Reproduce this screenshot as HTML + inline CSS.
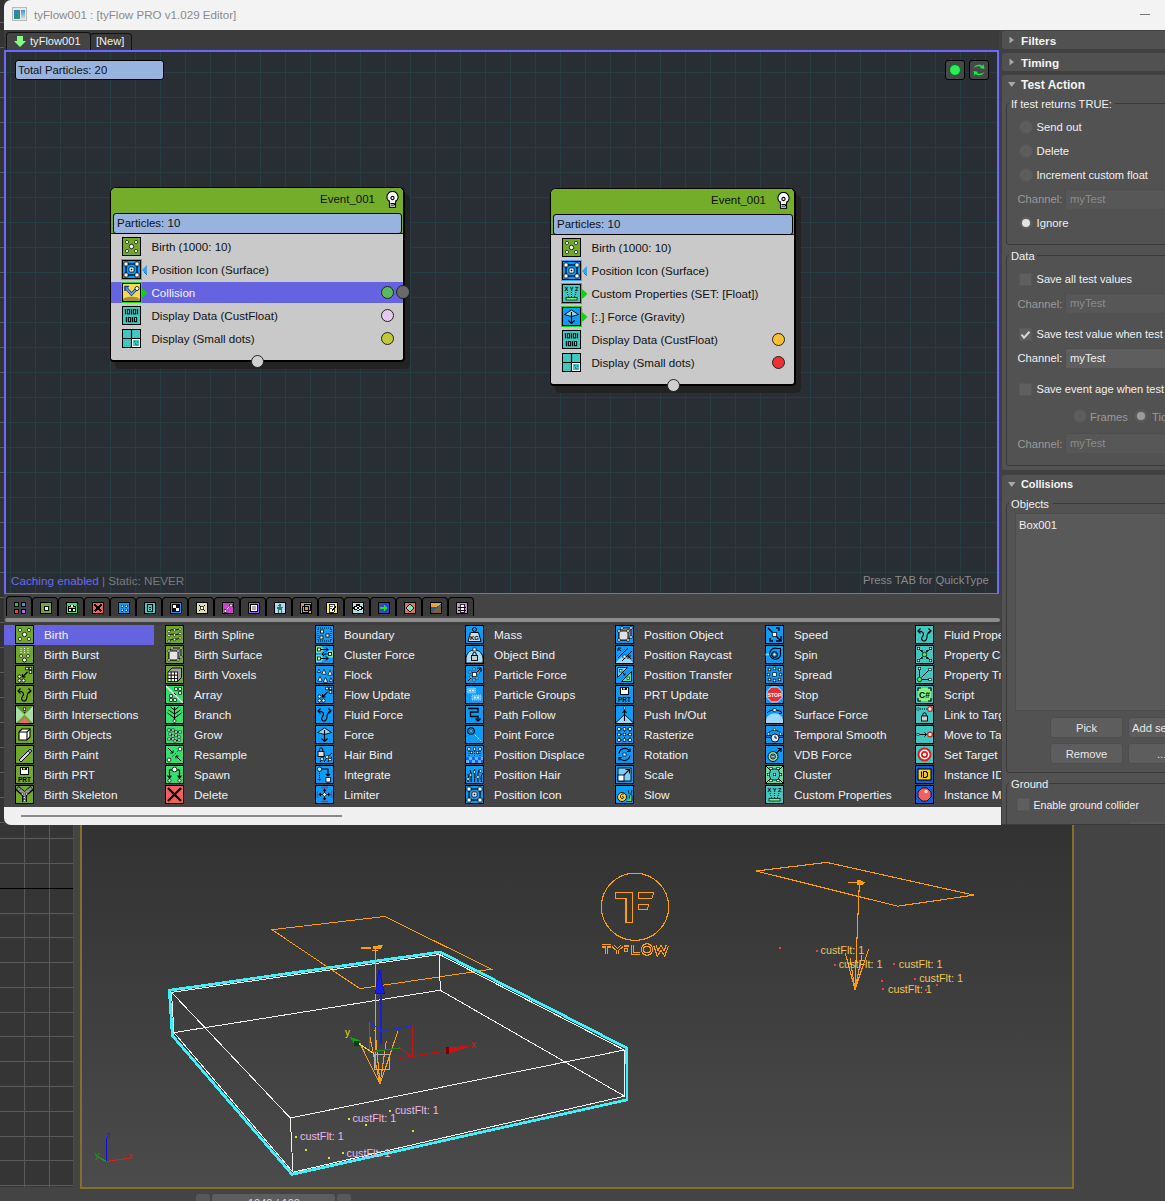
<!DOCTYPE html><html><head><meta charset="utf-8"><style>
*{box-sizing:border-box;margin:0;padding:0}
html,body{width:1165px;height:1201px;overflow:hidden;background:#3a3a3a;font-family:"Liberation Sans",sans-serif}
.a{position:absolute}
.t{position:absolute;white-space:nowrap;line-height:1}
</style></head><body>
<div class="a" style="left:0;top:0;width:4px;height:825px;background:#333"></div><div class="a" style="left:0;top:22px;width:4px;height:1px;background:#5c5c5c"></div><div class="a" style="left:0;top:47px;width:4px;height:1px;background:#5c5c5c"></div><div class="a" style="left:0;top:72px;width:4px;height:1px;background:#5c5c5c"></div><div class="a" style="left:0;top:97px;width:4px;height:1px;background:#5c5c5c"></div><div class="a" style="left:0;top:122px;width:4px;height:1px;background:#5c5c5c"></div><div class="a" style="left:0;top:147px;width:4px;height:1px;background:#5c5c5c"></div><div class="a" style="left:0;top:172px;width:4px;height:1px;background:#5c5c5c"></div><div class="a" style="left:0;top:197px;width:4px;height:1px;background:#5c5c5c"></div><div class="a" style="left:0;top:222px;width:4px;height:1px;background:#5c5c5c"></div><div class="a" style="left:0;top:247px;width:4px;height:1px;background:#5c5c5c"></div><div class="a" style="left:0;top:272px;width:4px;height:1px;background:#5c5c5c"></div><div class="a" style="left:0;top:297px;width:4px;height:1px;background:#5c5c5c"></div><div class="a" style="left:0;top:322px;width:4px;height:1px;background:#5c5c5c"></div><div class="a" style="left:0;top:347px;width:4px;height:1px;background:#5c5c5c"></div><div class="a" style="left:0;top:372px;width:4px;height:1px;background:#5c5c5c"></div><div class="a" style="left:0;top:397px;width:4px;height:1px;background:#5c5c5c"></div><div class="a" style="left:0;top:422px;width:4px;height:1px;background:#5c5c5c"></div><div class="a" style="left:0;top:447px;width:4px;height:1px;background:#5c5c5c"></div><div class="a" style="left:0;top:472px;width:4px;height:1px;background:#5c5c5c"></div><div class="a" style="left:0;top:497px;width:4px;height:1px;background:#5c5c5c"></div><div class="a" style="left:0;top:522px;width:4px;height:1px;background:#5c5c5c"></div><div class="a" style="left:0;top:547px;width:4px;height:1px;background:#5c5c5c"></div><div class="a" style="left:0;top:572px;width:4px;height:1px;background:#5c5c5c"></div><div class="a" style="left:0;top:597px;width:4px;height:1px;background:#5c5c5c"></div><div class="a" style="left:0;top:622px;width:4px;height:1px;background:#5c5c5c"></div><div class="a" style="left:0;top:647px;width:4px;height:1px;background:#5c5c5c"></div><div class="a" style="left:0;top:672px;width:4px;height:1px;background:#5c5c5c"></div><div class="a" style="left:0;top:697px;width:4px;height:1px;background:#5c5c5c"></div><div class="a" style="left:0;top:722px;width:4px;height:1px;background:#5c5c5c"></div><div class="a" style="left:0;top:747px;width:4px;height:1px;background:#5c5c5c"></div><div class="a" style="left:0;top:772px;width:4px;height:1px;background:#5c5c5c"></div><div class="a" style="left:0;top:797px;width:4px;height:1px;background:#5c5c5c"></div><div class="a" style="left:0;top:822px;width:4px;height:1px;background:#5c5c5c"></div><div class="a" style="left:0;top:825px;width:1165px;height:376px;background:#444"></div><div class="a" style="left:0;top:825px;width:74px;height:362px;background:#353535"></div><div class="a" style="left:24px;top:825px;width:1px;height:362px;background:#5a5a5a"></div><div class="a" style="left:49px;top:825px;width:1px;height:362px;background:#5a5a5a"></div><div class="a" style="left:0;top:838px;width:74px;height:1px;background:#5a5a5a"></div><div class="a" style="left:0;top:863px;width:74px;height:1px;background:#5a5a5a"></div><div class="a" style="left:0;top:888px;width:74px;height:1px;background:#000"></div><div class="a" style="left:0;top:913px;width:74px;height:1px;background:#5a5a5a"></div><div class="a" style="left:0;top:937px;width:74px;height:1px;background:#5a5a5a"></div><div class="a" style="left:0;top:962px;width:74px;height:1px;background:#5a5a5a"></div><div class="a" style="left:0;top:987px;width:74px;height:1px;background:#5a5a5a"></div><div class="a" style="left:0;top:1012px;width:74px;height:1px;background:#5a5a5a"></div><div class="a" style="left:0;top:1036px;width:74px;height:1px;background:#5a5a5a"></div><div class="a" style="left:0;top:1061px;width:74px;height:1px;background:#5a5a5a"></div><div class="a" style="left:0;top:1086px;width:74px;height:1px;background:#5a5a5a"></div><div class="a" style="left:0;top:1111px;width:74px;height:1px;background:#5a5a5a"></div><div class="a" style="left:0;top:1136px;width:74px;height:1px;background:#5a5a5a"></div><div class="a" style="left:0;top:1160px;width:74px;height:1px;background:#5a5a5a"></div><div class="a" style="left:0;top:1185px;width:74px;height:1px;background:#5a5a5a"></div><div class="a" style="left:73px;top:825px;width:1px;height:362px;background:#4a4a4a"></div><div class="a" style="left:80px;top:825px;width:994px;height:364px;background:linear-gradient(#323232,#4b4b4b);border-left:2px solid #83702c;border-right:2px solid #83702c;border-bottom:2px solid #83702c"></div><div class="a" style="left:196px;top:1194px;width:14px;height:10px;background:#585858;border-radius:3px"></div><div class="a" style="left:212px;top:1194px;width:123px;height:10px;background:#5d5d5d;border-radius:3px"></div><div class="a" style="left:337px;top:1194px;width:14px;height:10px;background:#585858;border-radius:3px"></div><div class="t" style="left:248px;top:1197.5px;font-size:11px;color:#dcdcdc">1040 / 100</div><div class="a" style="left:4px;top:0;width:1161px;height:30px;background:#f3f3f3;border-top-left-radius:7px"></div><div class="a" style="left:12px;top:7px;width:15px;height:14px;border:1px solid #b8b8b8;background:#e8e8e8"><div class="a" style="left:1px;top:2px;width:6px;height:9px;background:linear-gradient(135deg,#3a7abf,#2a9a6a)"></div><div class="a" style="left:8px;top:2px;width:4px;height:9px;background:linear-gradient(#4a8ad0,#d8e8d8)"></div></div><div class="t" style="left:34px;top:9px;font-size:11.6px;color:#8a8a8a">tyFlow001 : [tyFlow PRO v1.029 Editor]</div><div class="a" style="left:1140px;top:14px;width:10px;height:1px;background:#777"></div><div class="a" style="left:4px;top:30px;width:995px;height:20px;background:#3b3b3b"></div><div class="a" style="left:6px;top:32px;width:85px;height:19px;background:#444;border:1px solid #111;border-bottom:none;border-radius:4px 4px 0 0"></div><svg class="a" style="left:14px;top:36px" width="12" height="11"><path d="M3 0h6v5h3l-6 6l-6-6h3z" fill="#80ff80"/></svg><div class="t" style="left:30px;top:36px;font-size:11.1px;color:#f0f0f0">tyFlow001</div><div class="a" style="left:90px;top:33px;width:42px;height:18px;background:#3a3a3a;border:1px solid #111;border-bottom:none;border-radius:4px 4px 0 0"></div><div class="t" style="left:96px;top:36px;font-size:11.1px;color:#f0f0f0">[New]</div><div class="a" style="left:4px;top:50px;width:995px;height:545px;background:#292e35;border:2px solid #6a68ff;overflow:hidden"><div class="a" style="left:4px;top:0;width:1px;height:545px;background:#253d43"></div><div class="a" style="left:29px;top:0;width:1px;height:545px;background:#253d43"></div><div class="a" style="left:54px;top:0;width:1px;height:545px;background:#253d43"></div><div class="a" style="left:79px;top:0;width:1px;height:545px;background:#253d43"></div><div class="a" style="left:104px;top:0;width:1px;height:545px;background:#253d43"></div><div class="a" style="left:129px;top:0;width:1px;height:545px;background:#253d43"></div><div class="a" style="left:154px;top:0;width:1px;height:545px;background:#253d43"></div><div class="a" style="left:179px;top:0;width:1px;height:545px;background:#253d43"></div><div class="a" style="left:204px;top:0;width:1px;height:545px;background:#253d43"></div><div class="a" style="left:229px;top:0;width:1px;height:545px;background:#253d43"></div><div class="a" style="left:254px;top:0;width:1px;height:545px;background:#253d43"></div><div class="a" style="left:279px;top:0;width:1px;height:545px;background:#253d43"></div><div class="a" style="left:304px;top:0;width:1px;height:545px;background:#253d43"></div><div class="a" style="left:329px;top:0;width:1px;height:545px;background:#253d43"></div><div class="a" style="left:354px;top:0;width:1px;height:545px;background:#253d43"></div><div class="a" style="left:379px;top:0;width:1px;height:545px;background:#253d43"></div><div class="a" style="left:404px;top:0;width:1px;height:545px;background:#253d43"></div><div class="a" style="left:429px;top:0;width:1px;height:545px;background:#253d43"></div><div class="a" style="left:454px;top:0;width:1px;height:545px;background:#253d43"></div><div class="a" style="left:479px;top:0;width:1px;height:545px;background:#253d43"></div><div class="a" style="left:504px;top:0;width:1px;height:545px;background:#253d43"></div><div class="a" style="left:529px;top:0;width:1px;height:545px;background:#253d43"></div><div class="a" style="left:554px;top:0;width:1px;height:545px;background:#253d43"></div><div class="a" style="left:579px;top:0;width:1px;height:545px;background:#253d43"></div><div class="a" style="left:604px;top:0;width:1px;height:545px;background:#253d43"></div><div class="a" style="left:629px;top:0;width:1px;height:545px;background:#253d43"></div><div class="a" style="left:654px;top:0;width:1px;height:545px;background:#253d43"></div><div class="a" style="left:679px;top:0;width:1px;height:545px;background:#253d43"></div><div class="a" style="left:704px;top:0;width:1px;height:545px;background:#253d43"></div><div class="a" style="left:729px;top:0;width:1px;height:545px;background:#253d43"></div><div class="a" style="left:754px;top:0;width:1px;height:545px;background:#253d43"></div><div class="a" style="left:779px;top:0;width:1px;height:545px;background:#253d43"></div><div class="a" style="left:804px;top:0;width:1px;height:545px;background:#253d43"></div><div class="a" style="left:829px;top:0;width:1px;height:545px;background:#253d43"></div><div class="a" style="left:854px;top:0;width:1px;height:545px;background:#253d43"></div><div class="a" style="left:879px;top:0;width:1px;height:545px;background:#253d43"></div><div class="a" style="left:904px;top:0;width:1px;height:545px;background:#253d43"></div><div class="a" style="left:929px;top:0;width:1px;height:545px;background:#253d43"></div><div class="a" style="left:954px;top:0;width:1px;height:545px;background:#253d43"></div><div class="a" style="left:979px;top:0;width:1px;height:545px;background:#253d43"></div><div class="a" style="left:0;top:20px;width:995px;height:1px;background:#253d43"></div><div class="a" style="left:0;top:45px;width:995px;height:1px;background:#253d43"></div><div class="a" style="left:0;top:70px;width:995px;height:1px;background:#253d43"></div><div class="a" style="left:0;top:95px;width:995px;height:1px;background:#253d43"></div><div class="a" style="left:0;top:120px;width:995px;height:1px;background:#253d43"></div><div class="a" style="left:0;top:145px;width:995px;height:1px;background:#253d43"></div><div class="a" style="left:0;top:170px;width:995px;height:1px;background:#253d43"></div><div class="a" style="left:0;top:195px;width:995px;height:1px;background:#253d43"></div><div class="a" style="left:0;top:220px;width:995px;height:1px;background:#253d43"></div><div class="a" style="left:0;top:245px;width:995px;height:1px;background:#253d43"></div><div class="a" style="left:0;top:270px;width:995px;height:1px;background:#253d43"></div><div class="a" style="left:0;top:295px;width:995px;height:1px;background:#253d43"></div><div class="a" style="left:0;top:320px;width:995px;height:1px;background:#253d43"></div><div class="a" style="left:0;top:345px;width:995px;height:1px;background:#253d43"></div><div class="a" style="left:0;top:370px;width:995px;height:1px;background:#253d43"></div><div class="a" style="left:0;top:395px;width:995px;height:1px;background:#253d43"></div><div class="a" style="left:0;top:420px;width:995px;height:1px;background:#253d43"></div><div class="a" style="left:0;top:445px;width:995px;height:1px;background:#253d43"></div><div class="a" style="left:0;top:470px;width:995px;height:1px;background:#253d43"></div><div class="a" style="left:0;top:495px;width:995px;height:1px;background:#253d43"></div><div class="a" style="left:0;top:520px;width:995px;height:1px;background:#253d43"></div><div class="a" style="left:0;top:545px;width:995px;height:1px;background:#253d43"></div></div><div class="a" style="left:15px;top:60px;width:149px;height:20px;background:#98b4de;border:1px solid #000;border-radius:3px"></div><div class="t" style="left:18px;top:65px;font-size:11.3px;color:#111">Total Particles: 20</div><div class="a" style="left:945px;top:60px;width:20px;height:20px;background:#484848;border:1px solid #000;border-radius:3px"></div><div class="a" style="left:949px;top:64px;width:12px;height:12px;border-radius:50%;background:#28f050;border:1px solid #063"></div><div class="a" style="left:969px;top:60px;width:20px;height:20px;background:#484848;border:1px solid #000;border-radius:3px"></div><svg class="a" style="left:969px;top:60px" width="20" height="20"><path d="M4.5 8c2-4 7-4 9-2l1-2 1 5-5-1 2-1c-2-1-5-1-8 1z" fill="#10f040"/><path d="M15.5 12c-2 4-7 4-9 2l-1 2-1-5 5 1-2 1c2 1 5 1 8-1z" fill="#10f040"/></svg><div class="t" style="left:11px;top:575px;font-size:11.7px;color:#6a6aee">Caching enabled <span style="color:#7a7a7a">| Static: NEVER</span></div><div class="t" style="left:863px;top:575px;font-size:11.3px;color:#8a8a8a">Press TAB for QuickType</div><div class="a" style="left:115px;top:194px;width:295px;height:175px;background:#232323;border-radius:5px"></div><div class="a" style="left:110px;top:187px;width:295px;height:175px;background:#c9c9c9;border:1px solid #000;border-right-width:2px;border-bottom-width:2px;border-radius:6px 6px 4px 4px;overflow:hidden"><div class="a" style="left:0;top:0;width:295px;height:46px;background:#73ad2a;border-bottom:1px solid #1a1a1a"></div><div class="a" style="left:2px;top:25px;width:289px;height:21px;background:#98b4de;border:1px solid #000;border-radius:3px"></div><div class="t" style="left:6px;top:30px;font-size:11.5px;color:#111">Particles: 10</div><div class="t" style="right:28px;top:6px;font-size:11.5px;color:#111">Event_001</div><div class="a" style="left:11px;top:49px;width:19px;height:19px"><svg width="19" height="19" viewBox="0 0 19 19" style="display:block"><rect x="0.5" y="0.5" width="18" height="18" fill="#6fa82b" stroke="#000" stroke-width="1"/><circle cx="5" cy="5" r="1.6" fill="#fff" stroke="#000" stroke-width="0.65"/><circle cx="14" cy="5" r="1.6" fill="#fff" stroke="#000" stroke-width="0.65"/><circle cx="5" cy="14" r="1.6" fill="#fff" stroke="#000" stroke-width="0.65"/><circle cx="14" cy="14" r="1.6" fill="#fff" stroke="#000" stroke-width="0.65"/><circle cx="9.5" cy="9.5" r="2.2" fill="#fff" stroke="#000" stroke-width="0.8"/></svg></div><div class="t" style="left:40.5px;top:53px;font-size:11.6px;color:#111">Birth (1000: 10)</div><div class="a" style="left:10px;top:71px;width:21px;height:21px;background:#3aa8ff"></div><div class="a" style="left:11px;top:72px;width:19px;height:19px"><svg width="19" height="19" viewBox="0 0 19 19" style="display:block"><rect x="0.5" y="0.5" width="18" height="18" fill="#0c9cf8" stroke="#000" stroke-width="1"/><rect x="4" y="4" width="11" height="11" fill="none" stroke="#000" stroke-width="1.2"/><rect x="2" y="2" width="4" height="4" rx=".8" fill="#fff" stroke="#000" stroke-width=".8"/><rect x="13" y="2" width="4" height="4" rx=".8" fill="#fff" stroke="#000" stroke-width=".8"/><rect x="2" y="13" width="4" height="4" rx=".8" fill="#fff" stroke="#000" stroke-width=".8"/><rect x="13" y="13" width="4" height="4" rx=".8" fill="#fff" stroke="#000" stroke-width=".8"/><rect x="7" y="7" width="5" height="5" rx="1" fill="#fff" stroke="#000" stroke-width=".8"/><rect x="8.7" y="8.7" width="1.6" height="1.6" fill="#000"/></svg></div><svg class="a" style="left:31px;top:76.5px" width="6" height="10"><path d="M5 0L0 5l5 5z" fill="#3aa0f0"/><path d="M5 10L2 7" stroke="#1a70c0" stroke-width="1"/></svg><div class="t" style="left:40.5px;top:76px;font-size:11.6px;color:#111">Position Icon (Surface)</div><div class="a" style="left:0;top:94px;width:295px;height:21px;background:#6563e0"></div><div class="a" style="left:10px;top:94px;width:21px;height:21px;background:#10e010"></div><div class="a" style="left:11px;top:95px;width:19px;height:19px"><svg width="19" height="19" viewBox="0 0 19 19" style="display:block"><rect x="0.5" y="0.5" width="18" height="18" fill="#f8d850" stroke="#000" stroke-width="1"/><path d="M1 16c4-3 13-3 17 0v2H1z" fill="#b08a30"/><path d="M4 5l5.5 6 5-5" stroke="#1a3a8a" stroke-width="3" fill="none"/><path d="M4 5l5.5 6 5-5" stroke="#60a8f0" stroke-width="1.6" fill="none"/><path d="M3 8V3.5h4" stroke="#1a3a8a" stroke-width="1.5" fill="none"/><circle cx="15" cy="5.5" r="2" fill="#fff" stroke="#000" stroke-width="0.8"/></svg></div><svg class="a" style="left:31px;top:99.5px" width="6" height="10"><path d="M0 0l5.5 5L0 10z" fill="#10d010"/></svg><div class="t" style="left:40.5px;top:99px;font-size:11.6px;color:#f4f4ff">Collision</div><div class="a" style="left:270px;top:98px;width:13px;height:13px;border-radius:50%;background:#5cb85c;border:1px solid #222"></div><div class="a" style="left:11px;top:118px;width:19px;height:19px"><svg width="19" height="19" viewBox="0 0 19 19" style="display:block"><rect x="0.5" y="0.5" width="18" height="18" fill="#3fc8c2" stroke="#000" stroke-width="1"/><rect x="2.9" y="3.2" width="1.2" height="5.2" fill="#000"/><rect x="5.4" y="3.7" width="2.2" height="4.2" fill="none" stroke="#000" stroke-width="1"/><rect x="8.9" y="3.2" width="1.2" height="5.2" fill="#000"/><rect x="11.4" y="3.7" width="2.2" height="4.2" fill="none" stroke="#000" stroke-width="1"/><rect x="14.9" y="3.2" width="1.2" height="5.2" fill="#000"/><rect x="3.9" y="11" width="1.2" height="5.2" fill="#000"/><rect x="6.4" y="11.5" width="2.2" height="4.2" fill="none" stroke="#000" stroke-width="1"/><rect x="9.9" y="11" width="1.2" height="5.2" fill="#000"/><rect x="12.4" y="11.5" width="2.2" height="4.2" fill="none" stroke="#000" stroke-width="1"/></svg></div><div class="t" style="left:40.5px;top:122px;font-size:11.6px;color:#111">Display Data (CustFloat)</div><div class="a" style="left:270px;top:121px;width:13px;height:13px;border-radius:50%;background:#e8c8f0;border:1px solid #222"></div><div class="a" style="left:11px;top:141px;width:19px;height:19px"><svg width="19" height="19" viewBox="0 0 19 19" style="display:block"><rect x="0.5" y="0.5" width="18" height="18" fill="#3fc8c2" stroke="#000" stroke-width="1"/><path d="M9.5 1v17M1 9.5h17" stroke="#000" stroke-width="1.2"/><rect x="10" y="10" width="8" height="8" fill="#fff"/><rect x="11" y="11" width="6" height="6" fill="#40c8c8"/><path d="M12.5 12.5h.8M15 13h.8M13 15h.8M14.5 15.8h.8" stroke="#000" stroke-width=".9"/></svg></div><div class="t" style="left:40.5px;top:145px;font-size:11.6px;color:#111">Display (Small dots)</div><div class="a" style="left:270px;top:144px;width:13px;height:13px;border-radius:50%;background:#c0c838;border:1px solid #222"></div></div><svg class="a" style="left:386px;top:191px" width="14" height="17" viewBox="0 0 14 17"><circle cx="6.5" cy="6" r="5.6" fill="#fff" stroke="#000" stroke-width="1.1"/><rect x="3.5" y="10" width="6" height="6.3" fill="#fff" stroke="#000" stroke-width="1.1"/><rect x="3.9" y="9" width="5.2" height="2" fill="#fff"/><circle cx="6.5" cy="7" r="1.6" fill="none" stroke="#000" stroke-width="1.1"/><path d="M4.5 12.5h4v1.6h-4" stroke="#000" stroke-width="1" fill="none"/></svg><div class="a" style="left:251px;top:355px;width:13px;height:13px;border-radius:50%;background:#d0d0d0;border:1px solid #222"></div><div class="a" style="left:396px;top:285px;width:14px;height:14px;border-radius:50%;background:#6a6a6a;border:1px solid #222"></div><div class="a" style="left:555px;top:195px;width:246px;height:198px;background:#232323;border-radius:5px"></div><div class="a" style="left:550px;top:188px;width:246px;height:198px;background:#c9c9c9;border:1px solid #000;border-right-width:2px;border-bottom-width:2px;border-radius:6px 6px 4px 4px;overflow:hidden"><div class="a" style="left:0;top:0;width:246px;height:46px;background:#73ad2a;border-bottom:1px solid #1a1a1a"></div><div class="a" style="left:2px;top:25px;width:240px;height:21px;background:#98b4de;border:1px solid #000;border-radius:3px"></div><div class="t" style="left:6px;top:30px;font-size:11.5px;color:#111">Particles: 10</div><div class="t" style="right:28px;top:6px;font-size:11.5px;color:#111">Event_001</div><div class="a" style="left:11px;top:49px;width:19px;height:19px"><svg width="19" height="19" viewBox="0 0 19 19" style="display:block"><rect x="0.5" y="0.5" width="18" height="18" fill="#6fa82b" stroke="#000" stroke-width="1"/><circle cx="5" cy="5" r="1.6" fill="#fff" stroke="#000" stroke-width="0.65"/><circle cx="14" cy="5" r="1.6" fill="#fff" stroke="#000" stroke-width="0.65"/><circle cx="5" cy="14" r="1.6" fill="#fff" stroke="#000" stroke-width="0.65"/><circle cx="14" cy="14" r="1.6" fill="#fff" stroke="#000" stroke-width="0.65"/><circle cx="9.5" cy="9.5" r="2.2" fill="#fff" stroke="#000" stroke-width="0.8"/></svg></div><div class="t" style="left:40.5px;top:53px;font-size:11.6px;color:#111">Birth (1000: 10)</div><div class="a" style="left:10px;top:71px;width:21px;height:21px;background:#3aa8ff"></div><div class="a" style="left:11px;top:72px;width:19px;height:19px"><svg width="19" height="19" viewBox="0 0 19 19" style="display:block"><rect x="0.5" y="0.5" width="18" height="18" fill="#0c9cf8" stroke="#000" stroke-width="1"/><rect x="4" y="4" width="11" height="11" fill="none" stroke="#000" stroke-width="1.2"/><rect x="2" y="2" width="4" height="4" rx=".8" fill="#fff" stroke="#000" stroke-width=".8"/><rect x="13" y="2" width="4" height="4" rx=".8" fill="#fff" stroke="#000" stroke-width=".8"/><rect x="2" y="13" width="4" height="4" rx=".8" fill="#fff" stroke="#000" stroke-width=".8"/><rect x="13" y="13" width="4" height="4" rx=".8" fill="#fff" stroke="#000" stroke-width=".8"/><rect x="7" y="7" width="5" height="5" rx="1" fill="#fff" stroke="#000" stroke-width=".8"/><rect x="8.7" y="8.7" width="1.6" height="1.6" fill="#000"/></svg></div><svg class="a" style="left:31px;top:76.5px" width="6" height="10"><path d="M5 0L0 5l5 5z" fill="#3aa0f0"/><path d="M5 10L2 7" stroke="#1a70c0" stroke-width="1"/></svg><div class="t" style="left:40.5px;top:76px;font-size:11.6px;color:#111">Position Icon (Surface)</div><div class="a" style="left:10px;top:94px;width:21px;height:21px;background:#10e010"></div><div class="a" style="left:11px;top:95px;width:19px;height:19px"><svg width="19" height="19" viewBox="0 0 19 19" style="display:block"><rect x="0.5" y="0.5" width="18" height="18" fill="#3fc8c2" stroke="#000" stroke-width="1"/><text x="9.5" y="6.5" font-size="6" font-weight="bold" font-family="Liberation Sans" text-anchor="middle" fill="#000" textLength="14" lengthAdjust="spacingAndGlyphs">X Y Z</text><path d="M5 8l1.5 5M9.5 8v5M14 8l-1.5 5" stroke="#000" stroke-width=".9" stroke-dasharray="1 1"/><rect x="4" y="13.5" width="11" height="2.5" fill="#80f080" stroke="#000" stroke-width=".7"/></svg></div><svg class="a" style="left:31px;top:99.5px" width="6" height="10"><path d="M0 0l5.5 5L0 10z" fill="#10d010"/></svg><div class="t" style="left:40.5px;top:99px;font-size:11.6px;color:#111">Custom Properties (SET: [Float])</div><div class="a" style="left:10px;top:117px;width:21px;height:21px;background:#10e010"></div><div class="a" style="left:11px;top:118px;width:19px;height:19px"><svg width="19" height="19" viewBox="0 0 19 19" style="display:block"><rect x="0.5" y="0.5" width="18" height="18" fill="#0c9cf8" stroke="#000" stroke-width="1"/><path d="M2.5 7.5L9.5 3l7 4.5-7 2z" fill="#9ad8f0" stroke="#000" stroke-width=".9"/><path d="M9.5 5v11.5M6.5 13.5l3 3 3-3" stroke="#000" fill="none" stroke-width="1.1"/></svg></div><svg class="a" style="left:31px;top:122.5px" width="6" height="10"><path d="M0 0l5.5 5L0 10z" fill="#10d010"/></svg><div class="t" style="left:40.5px;top:122px;font-size:11.6px;color:#111">[:.] Force (Gravity)</div><div class="a" style="left:11px;top:141px;width:19px;height:19px"><svg width="19" height="19" viewBox="0 0 19 19" style="display:block"><rect x="0.5" y="0.5" width="18" height="18" fill="#3fc8c2" stroke="#000" stroke-width="1"/><rect x="2.9" y="3.2" width="1.2" height="5.2" fill="#000"/><rect x="5.4" y="3.7" width="2.2" height="4.2" fill="none" stroke="#000" stroke-width="1"/><rect x="8.9" y="3.2" width="1.2" height="5.2" fill="#000"/><rect x="11.4" y="3.7" width="2.2" height="4.2" fill="none" stroke="#000" stroke-width="1"/><rect x="14.9" y="3.2" width="1.2" height="5.2" fill="#000"/><rect x="3.9" y="11" width="1.2" height="5.2" fill="#000"/><rect x="6.4" y="11.5" width="2.2" height="4.2" fill="none" stroke="#000" stroke-width="1"/><rect x="9.9" y="11" width="1.2" height="5.2" fill="#000"/><rect x="12.4" y="11.5" width="2.2" height="4.2" fill="none" stroke="#000" stroke-width="1"/></svg></div><div class="t" style="left:40.5px;top:145px;font-size:11.6px;color:#111">Display Data (CustFloat)</div><div class="a" style="left:221px;top:144px;width:13px;height:13px;border-radius:50%;background:#f8c030;border:1px solid #222"></div><div class="a" style="left:11px;top:164px;width:19px;height:19px"><svg width="19" height="19" viewBox="0 0 19 19" style="display:block"><rect x="0.5" y="0.5" width="18" height="18" fill="#3fc8c2" stroke="#000" stroke-width="1"/><path d="M9.5 1v17M1 9.5h17" stroke="#000" stroke-width="1.2"/><rect x="10" y="10" width="8" height="8" fill="#fff"/><rect x="11" y="11" width="6" height="6" fill="#40c8c8"/><path d="M12.5 12.5h.8M15 13h.8M13 15h.8M14.5 15.8h.8" stroke="#000" stroke-width=".9"/></svg></div><div class="t" style="left:40.5px;top:168px;font-size:11.6px;color:#111">Display (Small dots)</div><div class="a" style="left:221px;top:167px;width:13px;height:13px;border-radius:50%;background:#f03030;border:1px solid #222"></div></div><svg class="a" style="left:777px;top:192px" width="14" height="17" viewBox="0 0 14 17"><circle cx="6.5" cy="6" r="5.6" fill="#fff" stroke="#000" stroke-width="1.1"/><rect x="3.5" y="10" width="6" height="6.3" fill="#fff" stroke="#000" stroke-width="1.1"/><rect x="3.9" y="9" width="5.2" height="2" fill="#fff"/><circle cx="6.5" cy="7" r="1.6" fill="none" stroke="#000" stroke-width="1.1"/><path d="M4.5 12.5h4v1.6h-4" stroke="#000" stroke-width="1" fill="none"/></svg><div class="a" style="left:667px;top:379px;width:13px;height:13px;border-radius:50%;background:#d0d0d0;border:1px solid #222"></div><div class="a" style="left:4px;top:594px;width:997px;height:213px;background:#444"></div><div class="a" style="left:4px;top:622px;width:997px;height:3px;background:#3e3e3e"></div><div class="a" style="left:6px;top:596px;width:26px;height:20px;background:#424242;border:1px solid #000;border-bottom:none;border-radius:4px 4px 0 0"></div><div class="a" style="left:14px;top:602px;width:5px;height:5px;background:#10d010;border:1px solid #000"></div><div class="a" style="left:21px;top:602px;width:5px;height:5px;background:#4090f0;border:1px solid #000"></div><div class="a" style="left:14px;top:609px;width:5px;height:5px;background:#f04040;border:1px solid #000"></div><div class="a" style="left:21px;top:609px;width:5px;height:5px;background:#a070f0;border:1px solid #000"></div><div class="a" style="left:32px;top:597px;width:26px;height:19px;background:#3a3a3a;border:1px solid #000;border-bottom:none;border-radius:4px 4px 0 0"></div><svg class="a" style="left:40px;top:602px" width="12" height="12" shape-rendering="crispEdges"><rect x=".5" y=".5" width="11" height="11" fill="#6fa82b" stroke="#000"/><rect x="3.5" y="3.5" width="5" height="5" fill="#000"/><rect x="4.5" y="4.5" width="3" height="3" fill="#fff"/></svg><div class="a" style="left:58px;top:597px;width:26px;height:19px;background:#3a3a3a;border:1px solid #000;border-bottom:none;border-radius:4px 4px 0 0"></div><svg class="a" style="left:66px;top:602px" width="12" height="12" shape-rendering="crispEdges"><rect x=".5" y=".5" width="11" height="11" fill="#36e06c" stroke="#000"/><path d="M2 10V4h2V3h4v1h2v6z" fill="#000"/><rect x="5" y="3" width="2" height="2" fill="#fff"/><rect x="3" y="7" width="2" height="2" fill="#fff"/><rect x="7" y="7" width="2" height="2" fill="#fff"/><rect x="3" y="5" width="6" height="1" fill="#3ee87a"/></svg><div class="a" style="left:84px;top:597px;width:26px;height:19px;background:#3a3a3a;border:1px solid #000;border-bottom:none;border-radius:4px 4px 0 0"></div><svg class="a" style="left:92px;top:602px" width="12" height="12" shape-rendering="crispEdges"><rect x=".5" y=".5" width="11" height="11" fill="#f25f5c" stroke="#000"/><path d="M2.5 2.5l7 7M9.5 2.5l-7 7" stroke="#000" stroke-width="1.8"/></svg><div class="a" style="left:110px;top:597px;width:26px;height:19px;background:#3a3a3a;border:1px solid #000;border-bottom:none;border-radius:4px 4px 0 0"></div><svg class="a" style="left:118px;top:602px" width="12" height="12" shape-rendering="crispEdges"><rect x=".5" y=".5" width="11" height="11" fill="#0c9cf8" stroke="#000"/><path d="M3 3h2v2H3zM7 3h2v2H7zM3 7h2v2H3zM7 7h2v2H7z" fill="#fff" stroke="#000" stroke-width=".5"/></svg><div class="a" style="left:136px;top:597px;width:26px;height:19px;background:#3a3a3a;border:1px solid #000;border-bottom:none;border-radius:4px 4px 0 0"></div><svg class="a" style="left:144px;top:602px" width="12" height="12" shape-rendering="crispEdges"><rect x=".5" y=".5" width="11" height="11" fill="#3fc8c2" stroke="#000"/><rect x="3.5" y="2.5" width="5" height="7" fill="none" stroke="#000"/><path d="M5 5h2M5 7h2" stroke="#000"/></svg><div class="a" style="left:162px;top:597px;width:26px;height:19px;background:#3a3a3a;border:1px solid #000;border-bottom:none;border-radius:4px 4px 0 0"></div><svg class="a" style="left:170px;top:602px" width="12" height="12" shape-rendering="crispEdges"><rect x=".5" y=".5" width="11" height="11" fill="#0c9cf8" stroke="#000"/><rect x="2.5" y="2.5" width="7" height="7" fill="#fff" stroke="#000"/><rect x="2.5" y="6" width="3.5" height="3.5" fill="#000"/><rect x="6" y="2.5" width="3.5" height="3.5" fill="#000"/></svg><div class="a" style="left:188px;top:597px;width:26px;height:19px;background:#3a3a3a;border:1px solid #000;border-bottom:none;border-radius:4px 4px 0 0"></div><svg class="a" style="left:196px;top:602px" width="12" height="12" shape-rendering="crispEdges"><rect x=".5" y=".5" width="11" height="11" fill="#e0dcb0" stroke="#000"/><path d="M3 3l6 6M9 3l-6 6" stroke="#000"/><circle cx="6" cy="6" r="2" fill="#fff" stroke="#000" stroke-width=".7"/></svg><div class="a" style="left:214px;top:597px;width:26px;height:19px;background:#3a3a3a;border:1px solid #000;border-bottom:none;border-radius:4px 4px 0 0"></div><svg class="a" style="left:222px;top:602px" width="12" height="12" shape-rendering="crispEdges"><rect x=".5" y=".5" width="11" height="11" fill="#d040d0" stroke="#000"/><path d="M3 9l6-6" stroke="#fff"/><rect x="2" y="7.5" width="2.5" height="2.5" fill="#fff" stroke="#000" stroke-width=".5"/><rect x="7.5" y="2" width="2.5" height="2.5" fill="#fff" stroke="#000" stroke-width=".5"/></svg><div class="a" style="left:240px;top:597px;width:26px;height:19px;background:#3a3a3a;border:1px solid #000;border-bottom:none;border-radius:4px 4px 0 0"></div><svg class="a" style="left:248px;top:602px" width="12" height="12" shape-rendering="crispEdges"><rect x=".5" y=".5" width="11" height="11" fill="#9a5cf0" stroke="#000"/><rect x="2.5" y="2.5" width="7" height="7" fill="#fff" stroke="#000"/><rect x="4" y="4" width="4" height="4" fill="#aaa"/></svg><div class="a" style="left:266px;top:597px;width:26px;height:19px;background:#3a3a3a;border:1px solid #000;border-bottom:none;border-radius:4px 4px 0 0"></div><svg class="a" style="left:274px;top:602px" width="12" height="12" shape-rendering="crispEdges"><rect x=".5" y=".5" width="11" height="11" fill="#b8d4f4" stroke="#000"/><circle cx="6" cy="3.5" r="1.5" fill="#208060"/><path d="M3 5h6l-1 3v3H7V8H5v3H4V8z" fill="#208060"/></svg><div class="a" style="left:292px;top:597px;width:26px;height:19px;background:#3a3a3a;border:1px solid #000;border-bottom:none;border-radius:4px 4px 0 0"></div><svg class="a" style="left:300px;top:602px" width="12" height="12" shape-rendering="crispEdges"><rect x=".5" y=".5" width="11" height="11" fill="#f49020" stroke="#000"/><rect x="2" y="4" width="6" height="6" fill="none" stroke="#000"/><rect x="4" y="2" width="6" height="6" fill="none" stroke="#000"/></svg><div class="a" style="left:318px;top:597px;width:26px;height:19px;background:#3a3a3a;border:1px solid #000;border-bottom:none;border-radius:4px 4px 0 0"></div><svg class="a" style="left:326px;top:602px" width="12" height="12" shape-rendering="crispEdges"><rect x=".5" y=".5" width="11" height="11" fill="#f8e870" stroke="#000"/><path d="M3 2h5v8H3z" fill="#fff" stroke="#000" stroke-width=".8"/><path d="M4 4h3M4 6h2" stroke="#000" stroke-width=".6"/><path d="M6 9l4-5" stroke="#000" stroke-width="1.2"/></svg><div class="a" style="left:344px;top:597px;width:26px;height:19px;background:#3a3a3a;border:1px solid #000;border-bottom:none;border-radius:4px 4px 0 0"></div><svg class="a" style="left:352px;top:602px" width="12" height="12" shape-rendering="crispEdges"><rect x=".5" y=".5" width="11" height="11" fill="#a8e4e4" stroke="#000"/><path d="M1.5 6c2-3 7-3 9 0c-2 3-7 3-9 0z" fill="#fff" stroke="#000"/><circle cx="6" cy="6" r="1.5" fill="#000"/><rect x="4" y="1.5" width="4" height="2" fill="#000"/></svg><div class="a" style="left:370px;top:597px;width:26px;height:19px;background:#3a3a3a;border:1px solid #000;border-bottom:none;border-radius:4px 4px 0 0"></div><svg class="a" style="left:378px;top:602px" width="12" height="12" shape-rendering="crispEdges"><rect x=".5" y=".5" width="11" height="11" fill="#3048c8" stroke="#000"/><path d="M2 5h4V2.5L10 6l-4 3.5V7H2z" fill="#20e020"/></svg><div class="a" style="left:396px;top:597px;width:26px;height:19px;background:#3a3a3a;border:1px solid #000;border-bottom:none;border-radius:4px 4px 0 0"></div><svg class="a" style="left:404px;top:602px" width="12" height="12" shape-rendering="crispEdges"><rect x=".5" y=".5" width="11" height="11" fill="#e07060" stroke="#000"/><path d="M6 2l4 4-4 4-4-4z" fill="#80e0c0" stroke="#000" stroke-width=".8"/></svg><div class="a" style="left:422px;top:597px;width:26px;height:19px;background:#3a3a3a;border:1px solid #000;border-bottom:none;border-radius:4px 4px 0 0"></div><svg class="a" style="left:430px;top:602px" width="12" height="12" shape-rendering="crispEdges"><rect x=".5" y=".5" width="11" height="11" fill="#f0a040" stroke="#000"/><path d="M1 5c3-1 5 2 10-3v9H1z" fill="#2060a0"/><path d="M1 11L11 3v8z" fill="#806030"/></svg><div class="a" style="left:448px;top:597px;width:26px;height:19px;background:#3a3a3a;border:1px solid #000;border-bottom:none;border-radius:4px 4px 0 0"></div><svg class="a" style="left:456px;top:602px" width="12" height="12" shape-rendering="crispEdges"><rect x=".5" y=".5" width="11" height="11" fill="#c890d0" stroke="#000"/><rect x="4" y="2" width="4" height="8" fill="#fff" stroke="#000" stroke-width=".8"/><path d="M2 5h8M2 8h8" stroke="#000"/></svg><div class="a" style="left:5px;top:618px;width:995px;height:4px;background:#8c8c8c;border-radius:2px"></div><div class="a" style="left:4px;top:625px;width:997px;height:182px;overflow:hidden"><div class="a" style="left:0;top:0;width:150px;height:20px;background:#6563e0"></div><div class="a" style="left:11px;top:0px;width:19px;height:19px"><svg width="19" height="19" viewBox="0 0 19 19" style="display:block"><rect x="0.5" y="0.5" width="18" height="18" fill="#6fa82b" stroke="#000" stroke-width="1"/><circle cx="5" cy="5" r="1.6" fill="#fff" stroke="#000" stroke-width="0.65"/><circle cx="14" cy="5" r="1.6" fill="#fff" stroke="#000" stroke-width="0.65"/><circle cx="5" cy="14" r="1.6" fill="#fff" stroke="#000" stroke-width="0.65"/><circle cx="14" cy="14" r="1.6" fill="#fff" stroke="#000" stroke-width="0.65"/><circle cx="9.5" cy="9.5" r="2.2" fill="#fff" stroke="#000" stroke-width="0.8"/></svg></div><div class="t" style="left:40px;top:5px;font-size:11.8px;color:#f2f2f2">Birth</div><div class="a" style="left:11px;top:20px;width:19px;height:19px"><svg width="19" height="19" viewBox="0 0 19 19" style="display:block"><rect x="0.5" y="0.5" width="18" height="18" fill="#6fa82b" stroke="#000" stroke-width="1"/><path d="M6 3v6M9.5 3v5M13 3v6" stroke="#fff" stroke-width="1" stroke-dasharray="1 1"/><circle cx="6" cy="11" r="1.5" fill="#fff" stroke="#000" stroke-width="0.65"/><circle cx="13" cy="11" r="1.5" fill="#fff" stroke="#000" stroke-width="0.65"/><circle cx="9.5" cy="15" r="2" fill="#fff" stroke="#000" stroke-width="0.8"/></svg></div><div class="t" style="left:40px;top:25px;font-size:11.8px;color:#f2f2f2">Birth Burst</div><div class="a" style="left:11px;top:40px;width:19px;height:19px"><svg width="19" height="19" viewBox="0 0 19 19" style="display:block"><rect x="0.5" y="0.5" width="18" height="18" fill="#6fa82b" stroke="#000" stroke-width="1"/><circle cx="4.5" cy="11.5" r="1.6" fill="#fff" stroke="#000" stroke-width=".8"/><circle cx="4.5" cy="15.5" r="1.6" fill="#fff" stroke="#000" stroke-width=".8"/><circle cx="8.5" cy="15.5" r="1.6" fill="#fff" stroke="#000" stroke-width=".8"/><rect x="10.7" y="2.2" width="2.6" height="2.6" fill="#fff" stroke="#000" stroke-width=".8"/><rect x="14.2" y="2.2" width="2.6" height="2.6" fill="#fff" stroke="#000" stroke-width=".8"/><rect x="14.2" y="5.7" width="2.6" height="2.6" fill="#fff" stroke="#000" stroke-width=".8"/><path d="M12.5 7l-5 5M7.5 9v3h3" stroke="#000" stroke-width="1.1" fill="none"/></svg></div><div class="t" style="left:40px;top:45px;font-size:11.8px;color:#f2f2f2">Birth Flow</div><div class="a" style="left:11px;top:60px;width:19px;height:19px"><svg width="19" height="19" viewBox="0 0 19 19" style="display:block"><rect x="0.5" y="0.5" width="18" height="18" fill="#6fa82b" stroke="#000" stroke-width="1"/><path d="M5.5 3.5L3 6l2.5 2.5M13.5 3.5L16 6l-2.5 2.5" stroke="#000" fill="none" stroke-width="1.2"/><path d="M3.5 6C8.5 6 9.5 9 7.5 11.5C5 14.5 8.5 17.5 11 15C13 13 10.5 8 15.5 6" stroke="#000" fill="none" stroke-width="1.1"/></svg></div><div class="t" style="left:40px;top:65px;font-size:11.8px;color:#f2f2f2">Birth Fluid</div><div class="a" style="left:11px;top:80px;width:19px;height:19px"><svg width="19" height="19" viewBox="0 0 19 19" style="display:block"><rect x="0.5" y="0.5" width="18" height="18" fill="#6fa82b" stroke="#000" stroke-width="1"/><path d="M1 1L9.5 9.5L1 18zM18 1L9.5 9.5L18 18z" fill="#a8dca8"/><path d="M1 1H18L9.5 9.5z" fill="#5e9828"/><path d="M4.5 18L9.5 12.5L14.5 18z" fill="#f06868"/><path d="M9.5 3v6" stroke="#000" stroke-width="1" stroke-dasharray="1 1"/><rect x="8.3" y="3" width="2.4" height="2.4" fill="#fff" stroke="#000" stroke-width=".6"/></svg></div><div class="t" style="left:40px;top:85px;font-size:11.8px;color:#f2f2f2">Birth Intersections</div><div class="a" style="left:11px;top:100px;width:19px;height:19px"><svg width="19" height="19" viewBox="0 0 19 19" style="display:block"><rect x="0.5" y="0.5" width="18" height="18" fill="#6fa82b" stroke="#000" stroke-width="1"/><path d="M4 7l3-3h8v8l-3 3H4z" fill="#fff" stroke="#000" stroke-width="1.1"/><path d="M4 7h8v8M12 7l3-3" stroke="#000" fill="none" stroke-width="1.1"/></svg></div><div class="t" style="left:40px;top:105px;font-size:11.8px;color:#f2f2f2">Birth Objects</div><div class="a" style="left:11px;top:120px;width:19px;height:19px"><svg width="19" height="19" viewBox="0 0 19 19" style="display:block"><rect x="0.5" y="0.5" width="18" height="18" fill="#6fa82b" stroke="#000" stroke-width="1"/><path d="M4 15l9-9 2 2-9 9z" fill="#e0d0f0" stroke="#000" stroke-width="1"/><path d="M13 6l2-2 2 2-2 2" fill="#80a0ff" stroke="#000" stroke-width=".8"/></svg></div><div class="t" style="left:40px;top:125px;font-size:11.8px;color:#f2f2f2">Birth Paint</div><div class="a" style="left:11px;top:140px;width:19px;height:19px"><svg width="19" height="19" viewBox="0 0 19 19" style="display:block"><rect x="0.5" y="0.5" width="18" height="18" fill="#6fa82b" stroke="#000" stroke-width="1"/><rect x="5.5" y="2.5" width="8" height="7" fill="#fff" stroke="#000"/><rect x="7" y="2.5" width="5" height="2.5" fill="#000"/><rect x="8" y="3" width="2" height="1.5" fill="#f8d040"/><text x="9.5" y="17" font-size="6.5" font-weight="bold" text-anchor="middle" font-family="Liberation Sans" fill="#000">PRT</text></svg></div><div class="t" style="left:40px;top:145px;font-size:11.8px;color:#f2f2f2">Birth PRT</div><div class="a" style="left:11px;top:160px;width:19px;height:19px"><svg width="19" height="19" viewBox="0 0 19 19" style="display:block"><rect x="0.5" y="0.5" width="18" height="18" fill="#6fa82b" stroke="#000" stroke-width="1"/><path d="M2 3l7.5 6.5 7.5-6.5M9.5 9v8" stroke="#000" stroke-width="5" fill="none"/><path d="M2.5 3l7 6 7-6M9.5 9v8" stroke="#9a9a9a" stroke-width="3.2" fill="none"/><rect x="3" y="3" width="2" height="2" fill="#fff" stroke="#000" stroke-width=".5"/><rect x="14" y="3" width="2" height="2" fill="#fff" stroke="#000" stroke-width=".5"/><rect x="6.5" y="8" width="2" height="2" fill="#fff" stroke="#000" stroke-width=".5"/><rect x="10.5" y="8" width="2" height="2" fill="#fff" stroke="#000" stroke-width=".5"/><rect x="8.5" y="11.5" width="2" height="2" fill="#fff" stroke="#000" stroke-width=".5"/><rect x="8.5" y="14.5" width="2" height="2" fill="#fff" stroke="#000" stroke-width=".5"/></svg></div><div class="t" style="left:40px;top:165px;font-size:11.8px;color:#f2f2f2">Birth Skeleton</div><div class="a" style="left:161px;top:0px;width:19px;height:19px"><svg width="19" height="19" viewBox="0 0 19 19" style="display:block"><rect x="0.5" y="0.5" width="18" height="18" fill="#6fa82b" stroke="#000" stroke-width="1"/><path d="M4 6.5C7 3 10 6 15 4M4 10.5C7 7.5 10 11 15 8.5M4 16C7 13 10 15.5 15 13" stroke="#000" fill="none" stroke-width="1"/><rect x="2.8" y="5.3" width="2.4" height="2.4" rx="1" fill="#fff" stroke="#000" stroke-width=".6"/><rect x="8.3" y="3.8" width="2.4" height="2.4" rx="1" fill="#fff" stroke="#000" stroke-width=".6"/><rect x="13.8" y="2.8" width="2.4" height="2.4" rx="1" fill="#fff" stroke="#000" stroke-width=".6"/><rect x="2.8" y="9.3" width="2.4" height="2.4" rx="1" fill="#fff" stroke="#000" stroke-width=".6"/><rect x="8.3" y="8.8" width="2.4" height="2.4" rx="1" fill="#fff" stroke="#000" stroke-width=".6"/><rect x="13.8" y="7.3" width="2.4" height="2.4" rx="1" fill="#fff" stroke="#000" stroke-width=".6"/><rect x="2.8" y="14.8" width="2.4" height="2.4" rx="1" fill="#fff" stroke="#000" stroke-width=".6"/><rect x="8.3" y="13.3" width="2.4" height="2.4" rx="1" fill="#fff" stroke="#000" stroke-width=".6"/><rect x="13.8" y="11.8" width="2.4" height="2.4" rx="1" fill="#fff" stroke="#000" stroke-width=".6"/></svg></div><div class="t" style="left:190px;top:5px;font-size:11.8px;color:#f2f2f2">Birth Spline</div><div class="a" style="left:161px;top:20px;width:19px;height:19px"><svg width="19" height="19" viewBox="0 0 19 19" style="display:block"><rect x="0.5" y="0.5" width="18" height="18" fill="#6fa82b" stroke="#000" stroke-width="1"/><path d="M7 3h9v9l-3 3H4V6z" fill="#8a8a8a" stroke="#000" stroke-width=".8"/><rect x="4" y="6" width="9" height="9" rx="1.5" fill="#e4e4e4" stroke="#000" stroke-width=".9"/><rect x="2.8" y="4.8" width="2.4" height="2.4" rx="1" fill="#fff" stroke="#000" stroke-width=".6"/><rect x="11.8" y="4.8" width="2.4" height="2.4" rx="1" fill="#fff" stroke="#000" stroke-width=".6"/><rect x="2.8" y="13.8" width="2.4" height="2.4" rx="1" fill="#fff" stroke="#000" stroke-width=".6"/><rect x="11.8" y="13.8" width="2.4" height="2.4" rx="1" fill="#fff" stroke="#000" stroke-width=".6"/><rect x="5.8" y="1.8" width="2.4" height="2.4" rx="1" fill="#fff" stroke="#000" stroke-width=".6"/><rect x="14.8" y="1.8" width="2.4" height="2.4" rx="1" fill="#fff" stroke="#000" stroke-width=".6"/><rect x="14.8" y="10.8" width="2.4" height="2.4" rx="1" fill="#fff" stroke="#000" stroke-width=".6"/></svg></div><div class="t" style="left:190px;top:25px;font-size:11.8px;color:#f2f2f2">Birth Surface</div><div class="a" style="left:161px;top:40px;width:19px;height:19px"><svg width="19" height="19" viewBox="0 0 19 19" style="display:block"><rect x="0.5" y="0.5" width="18" height="18" fill="#6fa82b" stroke="#000" stroke-width="1"/><path d="M3 7l4-4h9.5v9.5l-4 4z" fill="#a0a0a0" stroke="#000" stroke-width=".9"/><rect x="3.0" y="7.0" width="3.2" height="3.2" fill="#fff" stroke="#000" stroke-width=".8"/><rect x="3.0" y="10.2" width="3.2" height="3.2" fill="#fff" stroke="#000" stroke-width=".8"/><rect x="3.0" y="13.4" width="3.2" height="3.2" fill="#fff" stroke="#000" stroke-width=".8"/><rect x="6.2" y="7.0" width="3.2" height="3.2" fill="#fff" stroke="#000" stroke-width=".8"/><rect x="6.2" y="10.2" width="3.2" height="3.2" fill="#fff" stroke="#000" stroke-width=".8"/><rect x="6.2" y="13.4" width="3.2" height="3.2" fill="#fff" stroke="#000" stroke-width=".8"/><rect x="9.4" y="7.0" width="3.2" height="3.2" fill="#fff" stroke="#000" stroke-width=".8"/><rect x="9.4" y="10.2" width="3.2" height="3.2" fill="#fff" stroke="#000" stroke-width=".8"/><rect x="9.4" y="13.4" width="3.2" height="3.2" fill="#fff" stroke="#000" stroke-width=".8"/></svg></div><div class="t" style="left:190px;top:45px;font-size:11.8px;color:#f2f2f2">Birth Voxels</div><div class="a" style="left:161px;top:60px;width:19px;height:19px"><svg width="19" height="19" viewBox="0 0 19 19" style="display:block"><rect x="0.5" y="0.5" width="18" height="18" fill="#36e06c" stroke="#000" stroke-width="1"/><path d="M1 1l17 17" stroke="#fff" stroke-width="1.1"/><path d="M9 8l2 2" stroke="#000" stroke-width="1"/><rect x="9.7" y="2.7" width="2.6" height="2.6" fill="#fff" stroke="#000" stroke-width=".7"/><rect x="13.7" y="2.7" width="2.6" height="2.6" fill="#fff" stroke="#000" stroke-width=".7"/><rect x="13.7" y="6.7" width="2.6" height="2.6" fill="#fff" stroke="#000" stroke-width=".7"/><rect x="4.7" y="9.7" width="2.6" height="2.6" fill="#fff" stroke="#000" stroke-width=".7"/><rect x="4.7" y="13.7" width="2.6" height="2.6" fill="#fff" stroke="#000" stroke-width=".7"/><rect x="8.7" y="13.7" width="2.6" height="2.6" fill="#fff" stroke="#000" stroke-width=".7"/></svg></div><div class="t" style="left:190px;top:65px;font-size:11.8px;color:#f2f2f2">Array</div><div class="a" style="left:161px;top:80px;width:19px;height:19px"><svg width="19" height="19" viewBox="0 0 19 19" style="display:block"><rect x="0.5" y="0.5" width="18" height="18" fill="#36e06c" stroke="#000" stroke-width="1"/><path d="M9.5 2v15M9.5 5l-4-3M9.5 5l4-3M9.5 9l-6-4M9.5 9l6-4M9.5 13l-7-5M9.5 13l7-5" stroke="#000" fill="none" stroke-width="1"/><circle cx="9.5" cy="16" r="1.5" fill="#fff" stroke="#000" stroke-width="0.65"/></svg></div><div class="t" style="left:190px;top:85px;font-size:11.8px;color:#f2f2f2">Branch</div><div class="a" style="left:161px;top:100px;width:19px;height:19px"><svg width="19" height="19" viewBox="0 0 19 19" style="display:block"><rect x="0.5" y="0.5" width="18" height="18" fill="#36e06c" stroke="#000" stroke-width="1"/><path d="M4 5h4l3 2h4M5 9l3 2 3-1 3 2M4 14h4l2 2 4-1" stroke="#000" fill="none" stroke-width="1"/><rect x="2.9" y="3.9" width="2.2" height="2.2" fill="#fff" stroke="#000" stroke-width=".55"/><rect x="6.9" y="3.9" width="2.2" height="2.2" fill="#fff" stroke="#000" stroke-width=".55"/><rect x="9.9" y="5.9" width="2.2" height="2.2" fill="#fff" stroke="#000" stroke-width=".55"/><rect x="13.9" y="5.9" width="2.2" height="2.2" fill="#fff" stroke="#000" stroke-width=".55"/><rect x="3.9" y="7.9" width="2.2" height="2.2" fill="#fff" stroke="#000" stroke-width=".55"/><rect x="6.9" y="9.9" width="2.2" height="2.2" fill="#fff" stroke="#000" stroke-width=".55"/><rect x="9.9" y="8.9" width="2.2" height="2.2" fill="#fff" stroke="#000" stroke-width=".55"/><rect x="12.9" y="10.9" width="2.2" height="2.2" fill="#fff" stroke="#000" stroke-width=".55"/><rect x="2.9" y="12.9" width="2.2" height="2.2" fill="#fff" stroke="#000" stroke-width=".55"/><rect x="6.9" y="12.9" width="2.2" height="2.2" fill="#fff" stroke="#000" stroke-width=".55"/><rect x="8.9" y="14.9" width="2.2" height="2.2" fill="#fff" stroke="#000" stroke-width=".55"/><rect x="12.9" y="13.9" width="2.2" height="2.2" fill="#fff" stroke="#000" stroke-width=".55"/></svg></div><div class="t" style="left:190px;top:105px;font-size:11.8px;color:#f2f2f2">Grow</div><div class="a" style="left:161px;top:120px;width:19px;height:19px"><svg width="19" height="19" viewBox="0 0 19 19" style="display:block"><rect x="0.5" y="0.5" width="18" height="18" fill="#36e06c" stroke="#000" stroke-width="1"/><path d="M3 3l5 5M16 16l-5-5M5.5 8H8V5.5M13.5 11H11v2.5" stroke="#000" fill="none" stroke-width="1"/><path d="M5 14l9-9" stroke="#000" stroke-width=".8" stroke-dasharray="1 1.5"/><circle cx="15" cy="4" r="1.9" fill="#fff" stroke="#000" stroke-width=".7"/><circle cx="4" cy="15" r="1.9" fill="#fff" stroke="#000" stroke-width=".7"/></svg></div><div class="t" style="left:190px;top:125px;font-size:11.8px;color:#f2f2f2">Resample</div><div class="a" style="left:161px;top:140px;width:19px;height:19px"><svg width="19" height="19" viewBox="0 0 19 19" style="display:block"><rect x="0.5" y="0.5" width="18" height="18" fill="#36e06c" stroke="#000" stroke-width="1"/><path d="M7 5H4.5v7M12 5h2.5v7M2.5 10.5l2 2.5 2-2.5M12.5 10.5l2 2.5 2-2.5" stroke="#000" fill="none" stroke-width="1.2"/><circle cx="9.5" cy="4.5" r="2.4" fill="#fff" stroke="#000" stroke-width=".8"/><circle cx="4.5" cy="15.5" r="1.6" fill="#fff" stroke="#000" stroke-width=".7"/><circle cx="14.5" cy="15.5" r="1.6" fill="#fff" stroke="#000" stroke-width=".7"/></svg></div><div class="t" style="left:190px;top:145px;font-size:11.8px;color:#f2f2f2">Spawn</div><div class="a" style="left:161px;top:160px;width:19px;height:19px"><svg width="19" height="19" viewBox="0 0 19 19" style="display:block"><rect x="0.5" y="0.5" width="18" height="18" fill="#f25f5c" stroke="#000" stroke-width="1"/><path d="M3 3l13 13M16 3L3 16" stroke="#000" stroke-width="2.2"/></svg></div><div class="t" style="left:190px;top:165px;font-size:11.8px;color:#f2f2f2">Delete</div><div class="a" style="left:311px;top:0px;width:19px;height:19px"><svg width="19" height="19" viewBox="0 0 19 19" style="display:block"><rect x="0.5" y="0.5" width="18" height="18" fill="#0c9cf8" stroke="#000" stroke-width="1"/><rect x="3" y="3" width="13" height="13" fill="none" stroke="#000" stroke-width="1" stroke-dasharray="1 1"/><rect x="5.5" y="5.0" width="3" height="3" fill="#fff" stroke="#000" stroke-width=".8"/><rect x="5.0" y="11.0" width="3" height="3" fill="#fff" stroke="#000" stroke-width=".8"/><rect x="11.0" y="9.0" width="3" height="3" fill="#fff" stroke="#000" stroke-width=".8"/></svg></div><div class="t" style="left:340px;top:5px;font-size:11.8px;color:#f2f2f2">Boundary</div><div class="a" style="left:311px;top:20px;width:19px;height:19px"><svg width="19" height="19" viewBox="0 0 19 19" style="display:block"><rect x="0.5" y="0.5" width="18" height="18" fill="#0c9cf8" stroke="#000" stroke-width="1"/><path d="M1 1h5l3 3.5-3 3.5H1zM1 10h5l3 3.5-3 3.5H1zM18 5.5h-4l-3 3.5 3 3.5h4z" fill="#70e8a8"/><path d="M6 4.5h7M11 2.5l2 2-2 2M6 13.5h7M11 11.5l2 2-2 2M14 9H7M9 7l-2 2 2 2" stroke="#000" fill="none" stroke-width="1"/><rect x="2.5" y="3.0" width="3" height="3" fill="#fff" stroke="#000" stroke-width=".8"/><rect x="2.5" y="12.0" width="3" height="3" fill="#fff" stroke="#000" stroke-width=".8"/><rect x="13.5" y="7.5" width="3" height="3" fill="#fff" stroke="#000" stroke-width=".8"/></svg></div><div class="t" style="left:340px;top:25px;font-size:11.8px;color:#f2f2f2">Cluster Force</div><div class="a" style="left:311px;top:40px;width:19px;height:19px"><svg width="19" height="19" viewBox="0 0 19 19" style="display:block"><rect x="0.5" y="0.5" width="18" height="18" fill="#0c9cf8" stroke="#000" stroke-width="1"/><path d="M2.5 7.5L4 4.0L5.5 7.5z" fill="#fff" stroke="#000" stroke-width=".7"/><path d="M6.8 9.2L9 4.3L11.2 9.2z" fill="#fff" stroke="#000" stroke-width=".7"/><path d="M12.8 10.2L15 5.3L17.2 10.2z" fill="#fff" stroke="#000" stroke-width=".7"/><path d="M2.8 16.2L5 11.3L7.2 16.2z" fill="#fff" stroke="#000" stroke-width=".7"/><path d="M8.3 17.2L10.5 12.3L12.7 17.2z" fill="#fff" stroke="#000" stroke-width=".7"/><path d="M14.4 16.6L16 12.9L17.6 16.6z" fill="#fff" stroke="#000" stroke-width=".7"/></svg></div><div class="t" style="left:340px;top:45px;font-size:11.8px;color:#f2f2f2">Flock</div><div class="a" style="left:311px;top:60px;width:19px;height:19px"><svg width="19" height="19" viewBox="0 0 19 19" style="display:block"><rect x="0.5" y="0.5" width="18" height="18" fill="#0c9cf8" stroke="#000" stroke-width="1"/><circle cx="4.5" cy="11.5" r="1.6" fill="#fff" stroke="#000" stroke-width=".8"/><circle cx="4.5" cy="15.5" r="1.6" fill="#fff" stroke="#000" stroke-width=".8"/><circle cx="8.5" cy="15.5" r="1.6" fill="#fff" stroke="#000" stroke-width=".8"/><rect x="10.7" y="2.2" width="2.6" height="2.6" fill="#fff" stroke="#000" stroke-width=".8"/><rect x="14.2" y="2.2" width="2.6" height="2.6" fill="#fff" stroke="#000" stroke-width=".8"/><rect x="14.2" y="5.7" width="2.6" height="2.6" fill="#fff" stroke="#000" stroke-width=".8"/><path d="M12.5 7l-5 5M7.5 9v3h3" stroke="#000" stroke-width="1.1" fill="none"/></svg></div><div class="t" style="left:340px;top:65px;font-size:11.8px;color:#f2f2f2">Flow Update</div><div class="a" style="left:311px;top:80px;width:19px;height:19px"><svg width="19" height="19" viewBox="0 0 19 19" style="display:block"><rect x="0.5" y="0.5" width="18" height="18" fill="#0c9cf8" stroke="#000" stroke-width="1"/><path d="M5.5 3.5L3 6l2.5 2.5M13.5 3.5L16 6l-2.5 2.5" stroke="#000" fill="none" stroke-width="1.2"/><path d="M3.5 6C8.5 6 9.5 9 7.5 11.5C5 14.5 8.5 17.5 11 15C13 13 10.5 8 15.5 6" stroke="#000" fill="none" stroke-width="1.1"/></svg></div><div class="t" style="left:340px;top:85px;font-size:11.8px;color:#f2f2f2">Fluid Force</div><div class="a" style="left:311px;top:100px;width:19px;height:19px"><svg width="19" height="19" viewBox="0 0 19 19" style="display:block"><rect x="0.5" y="0.5" width="18" height="18" fill="#0c9cf8" stroke="#000" stroke-width="1"/><path d="M2.5 7.5L9.5 3l7 4.5-7 2z" fill="#9ad8f0" stroke="#000" stroke-width=".9"/><path d="M9.5 5v11.5M6.5 13.5l3 3 3-3" stroke="#000" fill="none" stroke-width="1.1"/></svg></div><div class="t" style="left:340px;top:105px;font-size:11.8px;color:#f2f2f2">Force</div><div class="a" style="left:311px;top:120px;width:19px;height:19px"><svg width="19" height="19" viewBox="0 0 19 19" style="display:block"><rect x="0.5" y="0.5" width="18" height="18" fill="#0c9cf8" stroke="#000" stroke-width="1"/><rect x="3" y="6.5" width="6" height="5" fill="#ddd" stroke="#000" stroke-width=".9"/><path d="M4.3 6.5V4.5a1.7 1.7 0 0 1 3.4 0v2" stroke="#000" fill="none" stroke-width="1"/><path d="M5 17c2-3 3-5 5-7M9 17c2-3 4-6 8-9M13 17c1-2 2-4 4-5" stroke="#000" fill="none" stroke-width="1"/><rect x="5.8" y="12.8" width="2.4" height="2.4" fill="#fff" stroke="#000" stroke-width=".6"/><rect x="10.8" y="10.8" width="2.4" height="2.4" fill="#fff" stroke="#000" stroke-width=".6"/><rect x="13.8" y="13.3" width="2.4" height="2.4" fill="#fff" stroke="#000" stroke-width=".6"/></svg></div><div class="t" style="left:340px;top:125px;font-size:11.8px;color:#f2f2f2">Hair Bind</div><div class="a" style="left:311px;top:140px;width:19px;height:19px"><svg width="19" height="19" viewBox="0 0 19 19" style="display:block"><rect x="0.5" y="0.5" width="18" height="18" fill="#0c9cf8" stroke="#000" stroke-width="1"/><path d="M7 4h6v7M11 9l2 2 2-2" stroke="#000" fill="none" stroke-width="1.1"/><path d="M4.5 6.5v9M2.8 14l1.7 1.7 1.7-1.7" stroke="#000" fill="none" stroke-width="1" stroke-dasharray="1 .8"/><circle cx="4.5" cy="4.2" r="2.2" fill="#aae8ff" stroke="#000" stroke-width=".8"/><rect x="11" y="12.5" width="4.5" height="4.5" fill="#fff" stroke="#000" stroke-width=".8"/></svg></div><div class="t" style="left:340px;top:145px;font-size:11.8px;color:#f2f2f2">Integrate</div><div class="a" style="left:311px;top:160px;width:19px;height:19px"><svg width="19" height="19" viewBox="0 0 19 19" style="display:block"><rect x="0.5" y="0.5" width="18" height="18" fill="#0c9cf8" stroke="#000" stroke-width="1"/><path d="M6 2.5h7M6 16.5h7M2.5 6v7M16.5 6v7" stroke="#e82020" stroke-width="1.3"/><path d="M9.5 4v11M4 9.5h11" stroke="#000" stroke-width="1.2"/><path d="M7.5 6l2-2.5 2 2.5zM7.5 13l2 2.5 2-2.5zM6 7.5L3.5 9.5 6 11.5zM13 7.5l2.5 2-2.5 2z" fill="#000"/><path d="M9.5 7.5l2 2-2 2-2-2z" fill="#fff" stroke="#000" stroke-width=".6"/></svg></div><div class="t" style="left:340px;top:165px;font-size:11.8px;color:#f2f2f2">Limiter</div><div class="a" style="left:461px;top:0px;width:19px;height:19px"><svg width="19" height="19" viewBox="0 0 19 19" style="display:block"><rect x="0.5" y="0.5" width="18" height="18" fill="#0c9cf8" stroke="#000" stroke-width="1"/><path d="M3 16.5l2.5-9h8l2.5 9z" fill="#b8e4f8" stroke="#000" stroke-width="1"/><circle cx="9.5" cy="4.5" r="2" fill="none" stroke="#000" stroke-width="1"/><text x="9.5" y="14.5" font-size="6" font-family="Liberation Sans" font-weight="bold" text-anchor="middle" fill="#000">KG</text></svg></div><div class="t" style="left:490px;top:5px;font-size:11.8px;color:#f2f2f2">Mass</div><div class="a" style="left:461px;top:20px;width:19px;height:19px"><svg width="19" height="19" viewBox="0 0 19 19" style="display:block"><rect x="0.5" y="0.5" width="18" height="18" fill="#0c9cf8" stroke="#000" stroke-width="1"/><path d="M1 18V13C2 7 6 5 9.5 5S17 7 18 13v5z" fill="#a8dcf8" stroke="#000" stroke-width=".9"/><rect x="6.5" y="10.5" width="6" height="5" fill="#ccc" stroke="#000" stroke-width=".9"/><path d="M7.8 10.5V9a1.7 1.7 0 0 1 3.4 0v1.5" stroke="#000" fill="none"/><rect x="8" y="3" width="3" height="3" fill="#fff" stroke="#000" stroke-width=".6"/></svg></div><div class="t" style="left:490px;top:25px;font-size:11.8px;color:#f2f2f2">Object Bind</div><div class="a" style="left:461px;top:40px;width:19px;height:19px"><svg width="19" height="19" viewBox="0 0 19 19" style="display:block"><rect x="0.5" y="0.5" width="18" height="18" fill="#0c9cf8" stroke="#000" stroke-width="1"/><path d="M3 16L16 3M12 3h4v4" stroke="#000" fill="none" stroke-width="1"/><rect x="4" y="6" width="2" height="2" fill="#fff" stroke="#000" stroke-width=".5"/><rect x="8" y="3" width="2" height="2" fill="#fff" stroke="#000" stroke-width=".5"/><rect x="12" y="7" width="2" height="2" fill="#fff" stroke="#000" stroke-width=".5"/><rect x="5" y="11" width="2" height="2" fill="#fff" stroke="#000" stroke-width=".5"/><rect x="11" y="12" width="2" height="2" fill="#fff" stroke="#000" stroke-width=".5"/><rect x="8" y="14" width="2" height="2" fill="#fff" stroke="#000" stroke-width=".5"/><rect x="7.5" y="7.5" width="4" height="4" fill="#fff" stroke="#000" stroke-width=".7"/></svg></div><div class="t" style="left:490px;top:45px;font-size:11.8px;color:#f2f2f2">Particle Force</div><div class="a" style="left:461px;top:60px;width:19px;height:19px"><svg width="19" height="19" viewBox="0 0 19 19" style="display:block"><rect x="0.5" y="0.5" width="18" height="18" fill="#0c9cf8" stroke="#000" stroke-width="1"/><rect x="2.5" y="3" width="8" height="5" fill="#5ab8f8" stroke="#bfe6ff" stroke-width=".7" stroke-dasharray="1 1"/><rect x="7" y="10" width="9" height="5" fill="#5ab8f8" stroke="#bfe6ff" stroke-width=".7" stroke-dasharray="1 1"/><rect x="4.2" y="4.7" width="1.6" height="1.6" fill="#fff"/><rect x="7.2" y="4.7" width="1.6" height="1.6" fill="#fff"/><rect x="9.2" y="11.7" width="1.6" height="1.6" fill="#fff"/><rect x="12.2" y="11.7" width="1.6" height="1.6" fill="#fff"/></svg></div><div class="t" style="left:490px;top:65px;font-size:11.8px;color:#f2f2f2">Particle Groups</div><div class="a" style="left:461px;top:80px;width:19px;height:19px"><svg width="19" height="19" viewBox="0 0 19 19" style="display:block"><rect x="0.5" y="0.5" width="18" height="18" fill="#0c9cf8" stroke="#000" stroke-width="1"/><path d="M3 3.5h10v3.5H5.5v4.5H13v4" stroke="#000" fill="none" stroke-width="1.3"/><path d="M10.5 13.5l2.5 2.5 2.5-2.5" stroke="#000" fill="none" stroke-width="1.3"/></svg></div><div class="t" style="left:490px;top:85px;font-size:11.8px;color:#f2f2f2">Path Follow</div><div class="a" style="left:461px;top:100px;width:19px;height:19px"><svg width="19" height="19" viewBox="0 0 19 19" style="display:block"><rect x="0.5" y="0.5" width="18" height="18" fill="#0c9cf8" stroke="#000" stroke-width="1"/><circle cx="6" cy="6" r="3.3" fill="none" stroke="#000" stroke-width="1.1"/><rect x="5" y="5" width="2" height="2" fill="#fff" stroke="#000" stroke-width=".5"/><path d="M10 10l6.5 6.5" stroke="#fff" stroke-width="1" stroke-dasharray="1 1.3"/></svg></div><div class="t" style="left:490px;top:105px;font-size:11.8px;color:#f2f2f2">Point Force</div><div class="a" style="left:461px;top:120px;width:19px;height:19px"><svg width="19" height="19" viewBox="0 0 19 19" style="display:block"><rect x="0.5" y="0.5" width="18" height="18" fill="#0c9cf8" stroke="#000" stroke-width="1"/><path d="M1 12h17v6H1z" fill="#5ab8f8"/><path d="M1 12h3v3H1zM7 12h3v3H7zM13 12h3v3h-3zM4 15h3v3H4zM10 15h3v3h-3zM16 15h2v3h-2z" fill="#1a60e8"/><path d="M4 6v5M9.5 6v5M15 6v5" stroke="#000" stroke-width=".9" stroke-dasharray="1 1"/><rect x="2.8" y="2.8" width="2.4" height="2.4" fill="#fff" stroke="#000" stroke-width=".6"/><rect x="8.3" y="2.8" width="2.4" height="2.4" fill="#fff" stroke="#000" stroke-width=".6"/><rect x="13.8" y="2.8" width="2.4" height="2.4" fill="#fff" stroke="#000" stroke-width=".6"/><rect x="5.3" y="6.3" width="2.4" height="2.4" fill="#fff" stroke="#000" stroke-width=".6"/><rect x="11.3" y="6.3" width="2.4" height="2.4" fill="#fff" stroke="#000" stroke-width=".6"/></svg></div><div class="t" style="left:490px;top:125px;font-size:11.8px;color:#f2f2f2">Position Displace</div><div class="a" style="left:461px;top:140px;width:19px;height:19px"><svg width="19" height="19" viewBox="0 0 19 19" style="display:block"><rect x="0.5" y="0.5" width="18" height="18" fill="#0c9cf8" stroke="#000" stroke-width="1"/><path d="M3 17c0-4 1-5 0-8M6 17c0-4 1-8 -1-12M9.5 17c0-5 1-8 0-13M13 17c0-4-1-7 1-12M16.5 17c-1-4 0-7 1-9" stroke="#000" fill="none" stroke-width="1"/><rect x="1.9" y="12.9" width="2.2" height="2.2" fill="#fff" stroke="#000" stroke-width=".5"/><rect x="4.4" y="8.9" width="2.2" height="2.2" fill="#fff" stroke="#000" stroke-width=".5"/><rect x="8.4" y="5.9" width="2.2" height="2.2" fill="#fff" stroke="#000" stroke-width=".5"/><rect x="11.9" y="10.9" width="2.2" height="2.2" fill="#fff" stroke="#000" stroke-width=".5"/><rect x="14.4" y="4.9" width="2.2" height="2.2" fill="#fff" stroke="#000" stroke-width=".5"/></svg></div><div class="t" style="left:490px;top:145px;font-size:11.8px;color:#f2f2f2">Position Hair</div><div class="a" style="left:461px;top:160px;width:19px;height:19px"><svg width="19" height="19" viewBox="0 0 19 19" style="display:block"><rect x="0.5" y="0.5" width="18" height="18" fill="#0c9cf8" stroke="#000" stroke-width="1"/><rect x="4" y="4" width="11" height="11" fill="none" stroke="#000" stroke-width="1.2"/><rect x="2" y="2" width="4" height="4" rx=".8" fill="#fff" stroke="#000" stroke-width=".8"/><rect x="13" y="2" width="4" height="4" rx=".8" fill="#fff" stroke="#000" stroke-width=".8"/><rect x="2" y="13" width="4" height="4" rx=".8" fill="#fff" stroke="#000" stroke-width=".8"/><rect x="13" y="13" width="4" height="4" rx=".8" fill="#fff" stroke="#000" stroke-width=".8"/><rect x="7" y="7" width="5" height="5" rx="1" fill="#fff" stroke="#000" stroke-width=".8"/><rect x="8.7" y="8.7" width="1.6" height="1.6" fill="#000"/></svg></div><div class="t" style="left:490px;top:165px;font-size:11.8px;color:#f2f2f2">Position Icon</div><div class="a" style="left:611px;top:0px;width:19px;height:19px"><svg width="19" height="19" viewBox="0 0 19 19" style="display:block"><rect x="0.5" y="0.5" width="18" height="18" fill="#0c9cf8" stroke="#000" stroke-width="1"/><path d="M7 3h9v9l-3 3H4V6z" fill="#8a8a8a" stroke="#000" stroke-width=".8"/><rect x="4" y="6" width="9" height="9" rx="1" fill="#e0e0e0" stroke="#000" stroke-width=".9"/><rect x="2.7" y="4.7" width="2.6" height="2.6" rx="1" fill="#fff" stroke="#000" stroke-width=".7"/><rect x="11.7" y="4.7" width="2.6" height="2.6" rx="1" fill="#fff" stroke="#000" stroke-width=".7"/><rect x="2.7" y="13.7" width="2.6" height="2.6" rx="1" fill="#fff" stroke="#000" stroke-width=".7"/><rect x="11.7" y="13.7" width="2.6" height="2.6" rx="1" fill="#fff" stroke="#000" stroke-width=".7"/><rect x="5.7" y="1.7" width="2.6" height="2.6" rx="1" fill="#fff" stroke="#000" stroke-width=".7"/><rect x="14.7" y="1.7" width="2.6" height="2.6" rx="1" fill="#fff" stroke="#000" stroke-width=".7"/><rect x="14.7" y="10.7" width="2.6" height="2.6" rx="1" fill="#fff" stroke="#000" stroke-width=".7"/></svg></div><div class="t" style="left:640px;top:5px;font-size:11.8px;color:#f2f2f2">Position Object</div><div class="a" style="left:611px;top:20px;width:19px;height:19px"><svg width="19" height="19" viewBox="0 0 19 19" style="display:block"><rect x="0.5" y="0.5" width="18" height="18" fill="#0c9cf8" stroke="#000" stroke-width="1"/><path d="M1 18c3-5 6-6.5 8.5-6.5S15 13 18 18z" fill="#9ad8ff"/><path d="M3 13L13 3M7 16L17 6" stroke="#000" stroke-width="1"/><path d="M3 3l3 3M3 6V3h3M13 11l3 3M13 14v-3h3" stroke="#000" fill="none" stroke-width=".9"/><rect x="8" y="10" width="3" height="3" fill="#fff" stroke="#000" stroke-width=".6"/></svg></div><div class="t" style="left:640px;top:25px;font-size:11.8px;color:#f2f2f2">Position Raycast</div><div class="a" style="left:611px;top:40px;width:19px;height:19px"><svg width="19" height="19" viewBox="0 0 19 19" style="display:block"><rect x="0.5" y="0.5" width="18" height="18" fill="#0c9cf8" stroke="#000" stroke-width="1"/><path d="M2.5 2.5h10l-10 10z" fill="#5fd8ff" stroke="#000" stroke-width=".9"/><path d="M16.5 6.5v10h-10z" fill="#40e8b0" stroke="#000" stroke-width=".9"/><rect x="4.5" y="4.5" width="2.5" height="2.5" fill="#fff" stroke="#000" stroke-width=".6"/><rect x="12" y="12" width="2.5" height="2.5" fill="#fff" stroke="#000" stroke-width=".6"/><path d="M7 7l3 3M8.5 10h1.5V8.5" stroke="#000" fill="none" stroke-width=".9"/></svg></div><div class="t" style="left:640px;top:45px;font-size:11.8px;color:#f2f2f2">Position Transfer</div><div class="a" style="left:611px;top:60px;width:19px;height:19px"><svg width="19" height="19" viewBox="0 0 19 19" style="display:block"><rect x="0.5" y="0.5" width="18" height="18" fill="#0c9cf8" stroke="#000" stroke-width="1"/><rect x="5.5" y="2.5" width="8" height="7" fill="#fff" stroke="#000"/><rect x="7" y="2.5" width="5" height="2.5" fill="#000"/><rect x="8" y="3" width="2" height="1.5" fill="#f8d040"/><text x="9.5" y="17" font-size="6.5" font-weight="bold" text-anchor="middle" font-family="Liberation Sans" fill="#000">PRT</text></svg></div><div class="t" style="left:640px;top:65px;font-size:11.8px;color:#f2f2f2">PRT Update</div><div class="a" style="left:611px;top:80px;width:19px;height:19px"><svg width="19" height="19" viewBox="0 0 19 19" style="display:block"><rect x="0.5" y="0.5" width="18" height="18" fill="#0c9cf8" stroke="#000" stroke-width="1"/><path d="M1 18l8.5-8 8.5 8z" fill="#9ad8f8"/><path d="M1 17.5l8.5-8 8.5 8" stroke="#000" fill="none" stroke-width=".8"/><path d="M9.5 16V6M7.5 8l2-2.5 2 2.5" stroke="#000" fill="none" stroke-width="1.1"/><rect x="8.5" y="2" width="2" height="2" fill="#fff" stroke="#000" stroke-width=".5"/></svg></div><div class="t" style="left:640px;top:85px;font-size:11.8px;color:#f2f2f2">Push In/Out</div><div class="a" style="left:611px;top:100px;width:19px;height:19px"><svg width="19" height="19" viewBox="0 0 19 19" style="display:block"><rect x="0.5" y="0.5" width="18" height="18" fill="#0c9cf8" stroke="#000" stroke-width="1"/><path d="M4 4h11M4 9.5h11M4 15h11M4 4v11M9.5 4v11M15 4v11" stroke="#000" stroke-width=".8" stroke-dasharray="1 1"/><rect x="2.7" y="2.7" width="2.6" height="2.6" fill="#fff" stroke="#000" stroke-width=".7"/><rect x="2.7" y="8.2" width="2.6" height="2.6" fill="#fff" stroke="#000" stroke-width=".7"/><rect x="2.7" y="13.7" width="2.6" height="2.6" fill="#fff" stroke="#000" stroke-width=".7"/><rect x="8.2" y="2.7" width="2.6" height="2.6" fill="#fff" stroke="#000" stroke-width=".7"/><rect x="8.2" y="8.2" width="2.6" height="2.6" fill="#fff" stroke="#000" stroke-width=".7"/><rect x="8.2" y="13.7" width="2.6" height="2.6" fill="#fff" stroke="#000" stroke-width=".7"/><rect x="13.7" y="2.7" width="2.6" height="2.6" fill="#fff" stroke="#000" stroke-width=".7"/><rect x="13.7" y="8.2" width="2.6" height="2.6" fill="#fff" stroke="#000" stroke-width=".7"/><rect x="13.7" y="13.7" width="2.6" height="2.6" fill="#fff" stroke="#000" stroke-width=".7"/></svg></div><div class="t" style="left:640px;top:105px;font-size:11.8px;color:#f2f2f2">Rasterize</div><div class="a" style="left:611px;top:120px;width:19px;height:19px"><svg width="19" height="19" viewBox="0 0 19 19" style="display:block"><rect x="0.5" y="0.5" width="18" height="18" fill="#0c9cf8" stroke="#000" stroke-width="1"/><path d="M4 8.5a5.8 5.8 0 0 1 10.5-2.5M15 10.5a5.8 5.8 0 0 1-10.5 2.5" stroke="#000" fill="none" stroke-width="1.2"/><path d="M12 6.5h3v-3M7 12.5H4v3" stroke="#000" fill="none" stroke-width="1.1"/><rect x="8" y="8" width="3" height="3" fill="#fff" stroke="#000" stroke-width=".7"/></svg></div><div class="t" style="left:640px;top:125px;font-size:11.8px;color:#f2f2f2">Rotation</div><div class="a" style="left:611px;top:140px;width:19px;height:19px"><svg width="19" height="19" viewBox="0 0 19 19" style="display:block"><rect x="0.5" y="0.5" width="18" height="18" fill="#0c9cf8" stroke="#000" stroke-width="1"/><rect x="3" y="3" width="13" height="13" fill="#7ad0ff" stroke="#000" stroke-width=".9"/><rect x="3" y="10" width="6" height="6" fill="#fff" stroke="#000" stroke-width=".9"/><path d="M9 10l5.5-5.5M10.5 4.5h4v4" stroke="#000" fill="none" stroke-width="1.1"/></svg></div><div class="t" style="left:640px;top:145px;font-size:11.8px;color:#f2f2f2">Scale</div><div class="a" style="left:611px;top:160px;width:19px;height:19px"><svg width="19" height="19" viewBox="0 0 19 19" style="display:block"><rect x="0.5" y="0.5" width="18" height="18" fill="#0c9cf8" stroke="#000" stroke-width="1"/><circle cx="7" cy="12" r="4.5" fill="#f8d040" stroke="#000" stroke-width=".9"/><path d="M7 12c1-1 2 0 1.5 1s-2.5 1-3-1 1.5-3.5 3.5-3" stroke="#000" fill="none" stroke-width=".8"/><path d="M11 16.5h6V11c0-2-2-2-2.5 0v2.5" fill="#70d040" stroke="#000" stroke-width=".8"/><path d="M14 9l-1-4M16 9l1-4" stroke="#000" stroke-width=".8"/></svg></div><div class="t" style="left:640px;top:165px;font-size:11.8px;color:#f2f2f2">Slow</div><div class="a" style="left:761px;top:0px;width:19px;height:19px"><svg width="19" height="19" viewBox="0 0 19 19" style="display:block"><rect x="0.5" y="0.5" width="18" height="18" fill="#0c9cf8" stroke="#000" stroke-width="1"/><path d="M3 3l13 13M16 11v5h-5M5 13v3h3M11 3h3v3" stroke="#000" stroke-width="1.4" fill="none"/><rect x="7.5" y="7.5" width="4" height="4" fill="#fff" stroke="#000" stroke-width=".7"/></svg></div><div class="t" style="left:790px;top:5px;font-size:11.8px;color:#f2f2f2">Speed</div><div class="a" style="left:761px;top:20px;width:19px;height:19px"><svg width="19" height="19" viewBox="0 0 19 19" style="display:block"><rect x="0.5" y="0.5" width="18" height="18" fill="#0c9cf8" stroke="#000" stroke-width="1"/><path d="M0.5 9.5h6" stroke="#7ad0ff" stroke-width="2"/><path d="M15 6a5.5 5.5 0 1 1-3-2.5M12 3.5h3.5V7" stroke="#000" fill="none" stroke-width="1.1"/><circle cx="9.5" cy="9.5" r="3" fill="none" stroke="#000" stroke-width="1"/><rect x="8" y="8" width="3" height="3" fill="#fff" stroke="#000" stroke-width=".6"/></svg></div><div class="t" style="left:790px;top:25px;font-size:11.8px;color:#f2f2f2">Spin</div><div class="a" style="left:761px;top:40px;width:19px;height:19px"><svg width="19" height="19" viewBox="0 0 19 19" style="display:block"><rect x="0.5" y="0.5" width="18" height="18" fill="#0c9cf8" stroke="#000" stroke-width="1"/><rect x="3.2" y="3.2" width="2.6" height="2.6" fill="#fff" stroke="#000" stroke-width=".7"/><rect x="8.2" y="2.2" width="2.6" height="2.6" fill="#fff" stroke="#000" stroke-width=".7"/><rect x="13.2" y="3.2" width="2.6" height="2.6" fill="#fff" stroke="#000" stroke-width=".7"/><rect x="2.2" y="8.2" width="2.6" height="2.6" fill="#fff" stroke="#000" stroke-width=".7"/><rect x="14.2" y="8.2" width="2.6" height="2.6" fill="#fff" stroke="#000" stroke-width=".7"/><rect x="3.2" y="13.2" width="2.6" height="2.6" fill="#fff" stroke="#000" stroke-width=".7"/><rect x="8.2" y="14.2" width="2.6" height="2.6" fill="#fff" stroke="#000" stroke-width=".7"/><rect x="13.2" y="13.2" width="2.6" height="2.6" fill="#fff" stroke="#000" stroke-width=".7"/><rect x="7.7" y="7.7" width="3.6" height="3.6" fill="#fff" stroke="#000" stroke-width=".7"/></svg></div><div class="t" style="left:790px;top:45px;font-size:11.8px;color:#f2f2f2">Spread</div><div class="a" style="left:761px;top:60px;width:19px;height:19px"><svg width="19" height="19" viewBox="0 0 19 19" style="display:block"><rect x="0.5" y="0.5" width="18" height="18" fill="#0c9cf8" stroke="#000" stroke-width="1"/><path d="M6.5 2h6l4.5 4.5v6L12.5 17h-6L2 12.5v-6z" fill="#e83030" stroke="#fff" stroke-width=".8"/><text x="9.5" y="11.5" font-size="5" font-weight="bold" text-anchor="middle" font-family="Liberation Sans" fill="#fff">STOP</text></svg></div><div class="t" style="left:790px;top:65px;font-size:11.8px;color:#f2f2f2">Stop</div><div class="a" style="left:761px;top:80px;width:19px;height:19px"><svg width="19" height="19" viewBox="0 0 19 19" style="display:block"><rect x="0.5" y="0.5" width="18" height="18" fill="#0c9cf8" stroke="#000" stroke-width="1"/><path d="M1 18V15C2 10 6 8.5 9.5 8.5S17 10 18 15v3z" fill="#9ad8ff"/><path d="M2 8c3-4 12-4 15 0M15 5.5l2 2.5-3 .5" stroke="#000" fill="none" stroke-width="1"/><rect x="8" y="3.5" width="3.2" height="3.2" rx="1" fill="#fff" stroke="#000" stroke-width=".7"/></svg></div><div class="t" style="left:790px;top:85px;font-size:11.8px;color:#f2f2f2">Surface Force</div><div class="a" style="left:761px;top:100px;width:19px;height:19px"><svg width="19" height="19" viewBox="0 0 19 19" style="display:block"><rect x="0.5" y="0.5" width="18" height="18" fill="#0c9cf8" stroke="#000" stroke-width="1"/><path d="M1 11.5h17" stroke="#000" stroke-width="2.4"/><path d="M1 11.5h17" stroke="#1a6ac8" stroke-width="1"/><path d="M3 8.5c2-4 11-4 13 0" stroke="#000" fill="none" stroke-width=".8"/><circle cx="10" cy="13" r="4" fill="#d8e8f8" stroke="#000" stroke-width=".9"/><path d="M10 10.8V13h2" stroke="#000" stroke-width=".9" fill="none"/><rect x="2.3" y="7.8" width="2.4" height="2.4" rx="1" fill="#fff" stroke="#000" stroke-width=".6"/><rect x="8.3" y="3.3" width="2.4" height="2.4" rx="1" fill="#fff" stroke="#000" stroke-width=".6"/><rect x="14.3" y="7.8" width="2.4" height="2.4" rx="1" fill="#fff" stroke="#000" stroke-width=".6"/></svg></div><div class="t" style="left:790px;top:105px;font-size:11.8px;color:#f2f2f2">Temporal Smooth</div><div class="a" style="left:761px;top:120px;width:19px;height:19px"><svg width="19" height="19" viewBox="0 0 19 19" style="display:block"><rect x="0.5" y="0.5" width="18" height="18" fill="#0c9cf8" stroke="#000" stroke-width="1"/><circle cx="8" cy="11.5" r="5" fill="#9ad8b0" stroke="#000" stroke-width=".9"/><circle cx="8" cy="11.5" r="2.5" fill="none" stroke="#000" stroke-width=".8"/><rect x="7" y="10.5" width="2" height="2" fill="#fff" stroke="#000" stroke-width=".5"/><path d="M11 8.5l5-5M12.5 3.5h3.5V7" stroke="#000" fill="none" stroke-width="1.1"/></svg></div><div class="t" style="left:790px;top:125px;font-size:11.8px;color:#f2f2f2">VDB Force</div><div class="a" style="left:761px;top:140px;width:19px;height:19px"><svg width="19" height="19" viewBox="0 0 19 19" style="display:block"><rect x="0.5" y="0.5" width="18" height="18" fill="#50d890" stroke="#000" stroke-width="1"/><path d="M1 1h17v17H1z" fill="#60e0a0"/><path d="M1 1l5 5M18 1l-5 5M1 18l5-5M18 18l-5-5" stroke="#000" stroke-width="1"/><path d="M6 4h7l2 5.5-2 5.5H6L4 9.5z" fill="#40c8c0" stroke="#000" stroke-width=".8"/><rect x="4.8" y="2.3" width="2.4" height="2.4" fill="#fff" stroke="#000" stroke-width=".6"/><rect x="11.8" y="2.3" width="2.4" height="2.4" fill="#fff" stroke="#000" stroke-width=".6"/><rect x="2.3" y="8.3" width="2.4" height="2.4" fill="#fff" stroke="#000" stroke-width=".6"/><rect x="14.3" y="8.3" width="2.4" height="2.4" fill="#fff" stroke="#000" stroke-width=".6"/><rect x="4.8" y="14.3" width="2.4" height="2.4" fill="#fff" stroke="#000" stroke-width=".6"/><rect x="11.8" y="14.3" width="2.4" height="2.4" fill="#fff" stroke="#000" stroke-width=".6"/><rect x="8.3" y="8.3" width="2.4" height="2.4" fill="#fff" stroke="#000" stroke-width=".6"/></svg></div><div class="t" style="left:790px;top:145px;font-size:11.8px;color:#f2f2f2">Cluster</div><div class="a" style="left:761px;top:160px;width:19px;height:19px"><svg width="19" height="19" viewBox="0 0 19 19" style="display:block"><rect x="0.5" y="0.5" width="18" height="18" fill="#3fc8c2" stroke="#000" stroke-width="1"/><text x="9.5" y="6.5" font-size="6" font-weight="bold" font-family="Liberation Sans" text-anchor="middle" fill="#000" textLength="14" lengthAdjust="spacingAndGlyphs">X Y Z</text><path d="M5 8l1.5 5M9.5 8v5M14 8l-1.5 5" stroke="#000" stroke-width=".9" stroke-dasharray="1 1"/><rect x="4" y="13.5" width="11" height="2.5" fill="#80f080" stroke="#000" stroke-width=".7"/></svg></div><div class="t" style="left:790px;top:165px;font-size:11.8px;color:#f2f2f2">Custom Properties</div><div class="a" style="left:911px;top:0px;width:19px;height:19px"><svg width="19" height="19" viewBox="0 0 19 19" style="display:block"><rect x="0.5" y="0.5" width="18" height="18" fill="#3fc8c2" stroke="#000" stroke-width="1"/><path d="M5.5 3.5L3 6l2.5 2.5M13.5 3.5L16 6l-2.5 2.5" stroke="#000" fill="none" stroke-width="1.2"/><path d="M3.5 6C8.5 6 9.5 9 7.5 11.5C5 14.5 8.5 17.5 11 15C13 13 10.5 8 15.5 6" stroke="#000" fill="none" stroke-width="1.1"/></svg></div><div class="t" style="left:940px;top:5px;font-size:11.8px;color:#f2f2f2">Fluid Properties</div><div class="a" style="left:911px;top:20px;width:19px;height:19px"><svg width="19" height="19" viewBox="0 0 19 19" style="display:block"><rect x="0.5" y="0.5" width="18" height="18" fill="#3fc8c2" stroke="#000" stroke-width="1"/><path d="M4 4l3.5 3.5M15 4l-3.5 3.5M4 15l3.5-3.5M15 15l-3.5-3.5" stroke="#000" stroke-width="1"/><path d="M6 5.5h1.5V7M13 5.5h-1.5V7M6 13.5h1.5V12M13 13.5h-1.5V12" stroke="#000" fill="none" stroke-width=".8"/><circle cx="9.5" cy="9.5" r="2.2" fill="#60e060" stroke="#000" stroke-width=".7"/><rect x="2.3" y="2.3" width="2.4" height="2.4" fill="#fff" stroke="#000" stroke-width=".6"/><rect x="14.3" y="2.3" width="2.4" height="2.4" fill="#fff" stroke="#000" stroke-width=".6"/><rect x="2.3" y="14.3" width="2.4" height="2.4" fill="#fff" stroke="#000" stroke-width=".6"/><rect x="14.3" y="14.3" width="2.4" height="2.4" fill="#fff" stroke="#000" stroke-width=".6"/></svg></div><div class="t" style="left:940px;top:25px;font-size:11.8px;color:#f2f2f2">Property Copy</div><div class="a" style="left:911px;top:40px;width:19px;height:19px"><svg width="19" height="19" viewBox="0 0 19 19" style="display:block"><rect x="0.5" y="0.5" width="18" height="18" fill="#3fc8c2" stroke="#000" stroke-width="1"/><path d="M4.5 5v8M7 14.5h7M6.5 12.5l7-7" stroke="#000" stroke-width="1" fill="none"/><circle cx="4.5" cy="14.5" r="2.2" fill="#60e060" stroke="#000" stroke-width=".7"/><rect x="3.3" y="2.3" width="2.4" height="2.4" fill="#fff" stroke="#000" stroke-width=".6"/><rect x="13.8" y="3.3" width="2.4" height="2.4" fill="#fff" stroke="#000" stroke-width=".6"/><rect x="13.8" y="13.3" width="2.4" height="2.4" fill="#fff" stroke="#000" stroke-width=".6"/></svg></div><div class="t" style="left:940px;top:45px;font-size:11.8px;color:#f2f2f2">Property Transfer</div><div class="a" style="left:911px;top:60px;width:19px;height:19px"><svg width="19" height="19" viewBox="0 0 19 19" style="display:block"><rect x="0.5" y="0.5" width="18" height="18" fill="#3fc8c2" stroke="#000" stroke-width="1"/><rect x="3" y="3" width="13" height="13" fill="#80f080"/><path d="M3 6V3h3M13 3h3v3M3 13v3h3M13 16h3v-3" stroke="#000" stroke-width="1.1" fill="none"/><text x="9.5" y="13" font-size="8.5" font-weight="bold" text-anchor="middle" font-family="Liberation Sans" fill="#000">C#</text></svg></div><div class="t" style="left:940px;top:65px;font-size:11.8px;color:#f2f2f2">Script</div><div class="a" style="left:911px;top:80px;width:19px;height:19px"><svg width="19" height="19" viewBox="0 0 19 19" style="display:block"><rect x="0.5" y="0.5" width="18" height="18" fill="#3fc8c2" stroke="#000" stroke-width="1"/><rect x="6.5" y="11" width="6" height="5" fill="#ccc" stroke="#000" stroke-width=".9"/><path d="M7.8 11V9.5a1.7 1.7 0 0 1 3.4 0V11" stroke="#000" fill="none"/><path d="M5 4h7" stroke="#000" stroke-dasharray="1 1"/><circle cx="15" cy="4" r="2.3" fill="#fff" stroke="#e01818" stroke-width="1.3"/><rect x="2" y="3" width="2" height="2" fill="#fff" stroke="#000" stroke-width=".6"/></svg></div><div class="t" style="left:940px;top:85px;font-size:11.8px;color:#f2f2f2">Link to Target</div><div class="a" style="left:911px;top:100px;width:19px;height:19px"><svg width="19" height="19" viewBox="0 0 19 19" style="display:block"><rect x="0.5" y="0.5" width="18" height="18" fill="#3fc8c2" stroke="#000" stroke-width="1"/><path d="M4.5 9.5h7M9.5 7.5l2 2-2 2" stroke="#000" fill="none" stroke-width="1"/><circle cx="15" cy="9.5" r="2.3" fill="#fff" stroke="#e01818" stroke-width="1.3"/><rect x="2" y="8.5" width="2" height="2" fill="#fff" stroke="#000" stroke-width=".6"/></svg></div><div class="t" style="left:940px;top:105px;font-size:11.8px;color:#f2f2f2">Move to Target</div><div class="a" style="left:911px;top:120px;width:19px;height:19px"><svg width="19" height="19" viewBox="0 0 19 19" style="display:block"><rect x="0.5" y="0.5" width="18" height="18" fill="#3fc8c2" stroke="#000" stroke-width="1"/><circle cx="9.5" cy="9.5" r="7" fill="#e81818"/><circle cx="9.5" cy="9.5" r="5" fill="#fff"/><circle cx="9.5" cy="9.5" r="3.5" fill="#e81818"/><circle cx="9.5" cy="9.5" r="1.8" fill="#fff"/></svg></div><div class="t" style="left:940px;top:125px;font-size:11.8px;color:#f2f2f2">Set Target</div><div class="a" style="left:911px;top:140px;width:19px;height:19px"><svg width="19" height="19" viewBox="0 0 19 19" style="display:block"><rect x="0.5" y="0.5" width="18" height="18" fill="#1060d8" stroke="#000" stroke-width="1"/><rect x="3" y="4" width="13" height="11" fill="#f8d020" stroke="#000" stroke-width="1.1"/><path d="M6.5 6.5v6M8.5 6.5h2.5l1.5 1.5v3l-1.5 1.5H8.5z" stroke="#000" fill="none" stroke-width="1.1"/></svg></div><div class="t" style="left:940px;top:145px;font-size:11.8px;color:#f2f2f2">Instance ID</div><div class="a" style="left:911px;top:160px;width:19px;height:19px"><svg width="19" height="19" viewBox="0 0 19 19" style="display:block"><rect x="0.5" y="0.5" width="18" height="18" fill="#1060d8" stroke="#000" stroke-width="1"/><path d="M7 3h5l4 4v5l-4 4H7l-4-4V7z" fill="#f06060" stroke="#000" stroke-width=".8"/><circle cx="11" cy="6.5" r="1.8" fill="#ffd0d0"/></svg></div><div class="t" style="left:940px;top:165px;font-size:11.8px;color:#f2f2f2">Instance Material</div></div><div class="a" style="left:4px;top:807px;width:997px;height:18px;background:#f0f0f0;border-bottom-left-radius:7px"></div><div class="a" style="left:21px;top:815px;width:321px;height:2px;background:#8a8a8a"></div><div class="a" style="left:0;top:0;width:1165px;height:824px;overflow:hidden"><div class="a" style="left:1001px;top:30px;width:164px;height:795px;background:#404040"></div><div class="a" style="left:999px;top:30px;width:2px;height:564px;background:#404040"></div><div class="a" style="left:1002px;top:31px;width:170px;height:18px;background:#515151;border-radius:3px"></div><div class="a" style="left:1002px;top:53px;width:170px;height:18px;background:#515151;border-radius:3px"></div><div class="a" style="left:1002px;top:75px;width:170px;height:395px;background:#525252;border-radius:3px"></div><div class="a" style="left:1002px;top:475px;width:170px;height:360px;background:#525252;border-radius:3px"></div><svg class="a" style="left:1009px;top:36px" width="6" height="8"><path d="M0.5 0.5L5 4 0.5 7.5z" fill="#a8a8a8"/></svg><div class="t" style="left:1021px;top:34.67px;font-size:11.73px;color:#f4f4f4;font-weight:bold">Filters</div><svg class="a" style="left:1009px;top:58px" width="6" height="8"><path d="M0.5 0.5L5 4 0.5 7.5z" fill="#a8a8a8"/></svg><div class="t" style="left:1021px;top:56.70px;font-size:11.7px;color:#f4f4f4;font-weight:bold">Timing</div><svg class="a" style="left:1008px;top:82px" width="8" height="6"><path d="M0 0h7.5L3.75 5z" fill="#a8a8a8"/></svg><div class="t" style="left:1021px;top:78.54px;font-size:12px;color:#f4f4f4;font-weight:bold">Test Action</div><svg class="a" style="left:1008px;top:482px" width="8" height="6"><path d="M0 0h7.5L3.75 5z" fill="#a8a8a8"/></svg><div class="t" style="left:1021px;top:479.07px;font-size:10.9px;color:#f4f4f4;font-weight:bold">Collisions</div><div class="a" style="left:1006px;top:103px;width:170px;height:142px;border:1px solid #3a3a3a;border-radius:3px"></div><div class="a" style="left:1009px;top:100px;width:106px;height:7px;background:#525252"></div><div class="t" style="left:1011px;top:98.60px;font-size:11.1px;color:#f0f0f0;font-weight:normal">If test returns TRUE:</div><div class="a" style="left:1019px;top:120px;width:14px;height:14px;border-radius:50%;background:#5d5d5d;border:1px solid #565656"></div><div class="t" style="left:1036.5px;top:122.23px;font-size:11.3px;color:#f0f0f0;font-weight:normal">Send out</div><div class="a" style="left:1019px;top:144px;width:14px;height:14px;border-radius:50%;background:#5d5d5d;border:1px solid #565656"></div><div class="t" style="left:1036.5px;top:146.23px;font-size:11.3px;color:#f0f0f0;font-weight:normal">Delete</div><div class="a" style="left:1019px;top:168px;width:14px;height:14px;border-radius:50%;background:#5d5d5d;border:1px solid #565656"></div><div class="t" style="left:1036.5px;top:170.47px;font-size:11.02px;color:#f0f0f0;font-weight:normal">Increment custom float</div><div class="t" style="left:1017.5px;top:194.12px;font-size:11.2px;color:#9a9a9a;font-weight:normal">Channel:</div><div class="a" style="left:1065px;top:189px;width:110px;height:20px;background:#575757;border-left:1px solid #4e4e4e;border-top:1px solid #4e4e4e"></div><div class="t" style="left:1070px;top:194.12px;font-size:11.2px;color:#8c8c8c;font-weight:normal">myTest</div><div class="a" style="left:1019px;top:216px;width:14px;height:14px;border-radius:50%;background:#5d5d5d;border:1px solid #565656"></div><div class="a" style="left:1022px;top:219px;width:8px;height:8px;border-radius:50%;background:#e4e4e4"></div><div class="t" style="left:1036.5px;top:218.23px;font-size:11.3px;color:#f0f0f0;font-weight:normal">Ignore</div><div class="a" style="left:1006px;top:255px;width:170px;height:211px;border:1px solid #3a3a3a;border-radius:3px"></div><div class="a" style="left:1009px;top:252px;width:28px;height:7px;background:#525252"></div><div class="t" style="left:1011px;top:250.52px;font-size:11.2px;color:#f0f0f0;font-weight:normal">Data</div><div class="a" style="left:1019px;top:273px;width:13px;height:13px;background:#5f5f5f;border:1px solid #575757"></div><div class="t" style="left:1036.5px;top:274.20px;font-size:11.1px;color:#f0f0f0;font-weight:normal">Save all test values</div><div class="t" style="left:1017.5px;top:298.52px;font-size:11.2px;color:#9a9a9a;font-weight:normal">Channel:</div><div class="a" style="left:1065px;top:293px;width:110px;height:20px;background:#575757;border-left:1px solid #4e4e4e;border-top:1px solid #4e4e4e"></div><div class="t" style="left:1070px;top:298.12px;font-size:11.2px;color:#8c8c8c;font-weight:normal">myTest</div><div class="a" style="left:1019px;top:328px;width:13px;height:13px;background:#5f5f5f;border:1px solid #575757"></div><svg class="a" style="left:1019px;top:328px" width="13" height="13"><path d="M2.5 6.5l2.5 3.2 5.5-6" stroke="#d8d8d8" stroke-width="2" fill="none"/></svg><div class="t" style="left:1036.5px;top:329.20px;font-size:11.1px;color:#f0f0f0;font-weight:normal">Save test value when test</div><div class="t" style="left:1017.5px;top:352.92px;font-size:11.2px;color:#f0f0f0;font-weight:normal">Channel:</div><div class="a" style="left:1065px;top:348px;width:110px;height:20px;background:#5e5e5e;border-left:1px solid #4e4e4e;border-top:1px solid #4e4e4e"></div><div class="t" style="left:1070px;top:353.12px;font-size:11.2px;color:#f0f0f0;font-weight:normal">myTest</div><div class="a" style="left:1019px;top:383px;width:13px;height:13px;background:#5f5f5f;border:1px solid #575757"></div><div class="t" style="left:1036.5px;top:384.00px;font-size:11.1px;color:#f0f0f0;font-weight:normal">Save event age when test</div><div class="a" style="left:1073px;top:409px;width:14px;height:14px;border-radius:50%;background:#5d5d5d;border:1px solid #565656"></div><div class="t" style="left:1090px;top:411.52px;font-size:11.2px;color:#9a9a9a;font-weight:normal">Frames</div><div class="a" style="left:1134px;top:409px;width:14px;height:14px;border-radius:50%;background:#5d5d5d;border:1px solid #565656"></div><div class="a" style="left:1137px;top:412px;width:8px;height:8px;border-radius:50%;background:#9c9c9c"></div><div class="t" style="left:1152px;top:411.52px;font-size:11.2px;color:#9a9a9a;font-weight:normal">Ticks</div><div class="t" style="left:1017.5px;top:438.52px;font-size:11.2px;color:#9a9a9a;font-weight:normal">Channel:</div><div class="a" style="left:1065px;top:433px;width:110px;height:20px;background:#575757;border-left:1px solid #4e4e4e;border-top:1px solid #4e4e4e"></div><div class="t" style="left:1070px;top:438.12px;font-size:11.2px;color:#8c8c8c;font-weight:normal">myTest</div><div class="a" style="left:1006px;top:503px;width:170px;height:270px;border:1px solid #3a3a3a;border-radius:3px"></div><div class="a" style="left:1009px;top:500px;width:44px;height:7px;background:#525252"></div><div class="t" style="left:1011px;top:499.02px;font-size:11.2px;color:#f0f0f0;font-weight:normal">Objects</div><div class="a" style="left:1015px;top:513px;width:160px;height:198px;background:#595959;border:1px solid #4c4c4c"></div><div class="t" style="left:1019px;top:519.82px;font-size:11.2px;color:#f0f0f0;font-weight:normal">Box001</div><div class="a" style="left:1050px;top:717px;width:73px;height:21px;background:#5d5d5d;border-radius:3px;border:1px solid #4e4e4e"></div><div class="t" style="left:1050px;top:722.5px;width:73px;text-align:center;font-size:11.2px;color:#e6e6e6">Pick</div><div class="a" style="left:1128px;top:717px;width:60px;height:21px;background:#5d5d5d;border-radius:3px;border:1px solid #4e4e4e"></div><div class="t" style="left:1132px;top:722.52px;font-size:11.2px;color:#e6e6e6;font-weight:normal">Add selected</div><div class="a" style="left:1050px;top:743px;width:73px;height:21px;background:#5d5d5d;border-radius:3px;border:1px solid #4e4e4e"></div><div class="t" style="left:1050px;top:748.5px;width:73px;text-align:center;font-size:11.2px;color:#e6e6e6">Remove</div><div class="a" style="left:1128px;top:743px;width:60px;height:21px;background:#5d5d5d;border-radius:3px;border:1px solid #4e4e4e"></div><div class="t" style="left:1157px;top:748.52px;font-size:11.2px;color:#e6e6e6;font-weight:normal">...</div><div class="a" style="left:1006px;top:783px;width:170px;height:57px;border:1px solid #3a3a3a;border-radius:3px"></div><div class="a" style="left:1009px;top:780px;width:40px;height:7px;background:#525252"></div><div class="t" style="left:1011px;top:778.52px;font-size:11.2px;color:#f0f0f0;font-weight:normal">Ground</div><div class="a" style="left:1017px;top:798px;width:13px;height:13px;background:#5f5f5f;border:1px solid #575757"></div><div class="t" style="left:1033.5px;top:800.03px;font-size:10.6px;color:#f0f0f0;font-weight:normal">Enable ground collider</div><div class="a" style="left:1129px;top:822px;width:50px;height:4px;background:#5a5a5a;border-radius:3px 3px 0 0"></div></div><svg class="a" style="left:0;top:825px" width="1165" height="376" viewBox="0 825 1165 376"><defs><clipPath id="vp"><rect x="81" y="825" width="991" height="362"/></clipPath></defs><g clip-path="url(#vp)" shape-rendering="crispEdges"><g fill="none" stroke="#fb9e12" stroke-width="1.1" shape-rendering="crispEdges"><circle cx="635" cy="906.8" r="33.6"/><path d="M615.3 892.2H632.5V922.7H626V898.6H615.3z"/><path d="M638.1 892.2H654L651.8 898.6H638.1z"/><path d="M638.1 904.2H649L647.1 909.8H638.1z"/></g><g fill="none" shape-rendering="crispEdges"><path d="M602 945.8H611M606.5 945.8V954M613 945.8L617.5 950L622 945.8M617.5 950V954M632.6 945.2V953.4H640.2M654.8 945.2L657.6 953.6L661 947.5L664.4 953.6L667.4 945.2" stroke="#fb9e12" stroke-width="3.4"/><circle cx="647" cy="949.5" r="4.6" stroke="#fb9e12" stroke-width="3.4"/><path d="M602 945.8H611M606.5 945.8V954M613 945.8L617.5 950L622 945.8M617.5 950V954M632.6 945.2V953.4H640.2M654.8 945.2L657.6 953.6L661 947.5L664.4 953.6L667.4 945.2" stroke="#393939" stroke-width="1.3"/><circle cx="647" cy="949.5" r="4.6" stroke="#393939" stroke-width="1.3"/><rect x="623.5" y="944.5" width="5" height="2" fill="#fb9e12"/><rect x="624" y="948.5" width="3.5" height="2.5" fill="none" stroke="#fb9e12" stroke-width="1"/></g><g shape-rendering="crispEdges"><polygon points="169.3,990.3 440,952 626.8,1048 627,1099.8 292,1174.4 172.3,1035.6" fill="none" stroke="#40f0f8" stroke-width="2.7" stroke-linejoin="miter"/><polygon points="272,929.7 384.6,916.5 491.7,969.2 359.8,988.6" fill="none" stroke="#fb9e12" stroke-width="1"/><line x1="171.5" y1="992.3" x2="439.5" y2="954.5" stroke="#f2f2f2" stroke-width="1"/><line x1="439.5" y1="954.5" x2="624.3" y2="1050" stroke="#f2f2f2" stroke-width="1"/><line x1="624.3" y1="1050" x2="290.3" y2="1118" stroke="#f2f2f2" stroke-width="1"/><line x1="290.3" y1="1118" x2="171.5" y2="992.3" stroke="#f2f2f2" stroke-width="1"/><line x1="174" y1="1032.6" x2="440.2" y2="990.2" stroke="#f2f2f2" stroke-width="1"/><line x1="440.2" y1="990.2" x2="624.6" y2="1096.2" stroke="#f2f2f2" stroke-width="1"/><line x1="624.6" y1="1096.2" x2="293" y2="1172.2" stroke="#f2f2f2" stroke-width="1"/><line x1="293" y1="1172.2" x2="174" y2="1032.6" stroke="#f2f2f2" stroke-width="1"/><line x1="171.5" y1="992.3" x2="174" y2="1032.6" stroke="#f2f2f2" stroke-width="1"/><line x1="439.5" y1="954.5" x2="440.2" y2="990.2" stroke="#f2f2f2" stroke-width="1"/><line x1="624.3" y1="1050" x2="624.6" y2="1096.2" stroke="#f2f2f2" stroke-width="1"/><line x1="290.3" y1="1118" x2="293" y2="1172.2" stroke="#f2f2f2" stroke-width="1"/><g stroke="#fb9e12" stroke-width="1.1" fill="none"><path d="M375.6 949V1068M380 1084L359.5 1042.6M380 1084L398 1031M380 1084L386.3 1041M380 1084L369 1033M380 1084L375 1030"/></g><path d="M361 947.8H371" stroke="#fb9e12" stroke-width="2"/><polygon points="372.9,946.3 383.4,944.6 381.1,948.8 373.2,948.8" fill="#fb9e12"/><path d="M372 950.5H378" stroke="#fb9e12" stroke-width="1"/><rect x="374.6" y="1054.3" width="15.2" height="15.1" fill="none" stroke="#b0b0b0" stroke-width="1"/><path d="M380.8 1044V969" stroke="#1a20d0" stroke-width="1.4"/><path d="M378.8 969L375 993.5H384.5z" fill="#1820e0" stroke="#1010a0" stroke-width=".6"/><path d="M369.1 1022L381.5 1031L411 1026.2" stroke="#2030d0" fill="none" stroke-width="1.2"/><path d="M412.4 1026V1057L400 1048M369.1 1022V1052L384 1049" stroke="#c01818" fill="none" stroke-width="1"/><path d="M369.5 1022V1052L400 1048" stroke="#189018" fill="none" stroke-width="1.2"/><path d="M400 1058.5L448 1050.5" stroke="#c01010" stroke-width="1.4"/><path d="M447 1047L471 1046L448 1054z" fill="#d01010"/><ellipse cx="447.5" cy="1050.5" rx="1.8" ry="4" fill="#700"/><text x="471" y="1048" font-family="Liberation Sans" font-size="10" fill="#d02020">x</text><path d="M374 1053.6L357.5 1042.6" stroke="#e8e020" stroke-width="1"/><path d="M349.2 1036.5L360 1040L356 1046z" fill="#10a010"/><circle cx="356.5" cy="1043.5" r="2.8" fill="#0a400a"/><text x="345" y="1036" font-family="Liberation Sans" font-size="10" fill="#e0e020">y</text></g><g stroke="#fb9e12" stroke-width="1.1" fill="none" shape-rendering="crispEdges"><polygon points="756.1,871 826.9,862.4 973.9,895.1 897.7,906.2"/><path d="M859.3 884L854.8 989.5M855 989.5L845.2 953M855 989.5L868.8 948.7M855 989.5L850 958M855 989.5L862 955"/></g><path d="M848 882.6H859" stroke="#fb9e12" stroke-width="1.6"/><polygon points="856.5,880.2 859.5,879.9 865.4,882.6 862,885.2 856.5,884.6" fill="#fb9e12"/><text x="820.5" y="954" font-family="Liberation Sans" font-size="10.8" fill="#f0c458">custFlt: 1</text><text x="838.7" y="968" font-family="Liberation Sans" font-size="10.8" fill="#f0c458">custFlt: 1</text><text x="898.8" y="968" font-family="Liberation Sans" font-size="10.8" fill="#f0c458">custFlt: 1</text><text x="919.2" y="982.4" font-family="Liberation Sans" font-size="10.8" fill="#f0c458">custFlt: 1</text><text x="888" y="992.7" font-family="Liberation Sans" font-size="10.8" fill="#f0c458">custFlt: 1</text><rect x="778.7" y="947" width="2" height="2" fill="#f04040"/><rect x="815.6" y="949.9" width="2" height="2" fill="#f04040"/><rect x="833.8" y="964.2" width="2" height="2" fill="#f04040"/><rect x="892.9" y="963.2" width="2" height="2" fill="#f04040"/><rect x="880.6" y="979.5" width="2" height="2" fill="#f04040"/><rect x="913.9" y="977.8" width="2" height="2" fill="#f04040"/><rect x="881.7" y="988" width="2" height="2" fill="#f04040"/><rect x="924.6" y="989" width="2" height="2" fill="#f04040"/><rect x="936" y="983.8" width="2" height="2" fill="#f04040"/><text x="394.9" y="1114" font-family="Liberation Sans" font-size="10.8" fill="#e8b8e8">custFlt: 1</text><text x="352.4" y="1122" font-family="Liberation Sans" font-size="10.8" fill="#e8b8e8">custFlt: 1</text><text x="300" y="1140" font-family="Liberation Sans" font-size="10.8" fill="#e8b8e8">custFlt: 1</text><text x="346.6" y="1157" font-family="Liberation Sans" font-size="10.8" fill="#e8b8e8">custFlt: 1</text><rect x="388.5" y="1110" width="2" height="2" fill="#d8e030"/><rect x="347.7" y="1118.2" width="2" height="2" fill="#d8e030"/><rect x="295" y="1136" width="2" height="2" fill="#d8e030"/><rect x="305.3" y="1149" width="2" height="2" fill="#d8e030"/><rect x="328" y="1156.5" width="2" height="2" fill="#d8e030"/><rect x="341.5" y="1152.4" width="2" height="2" fill="#d8e030"/><rect x="365" y="1123.5" width="2" height="2" fill="#d8e030"/><rect x="411.6" y="1129.7" width="2" height="2" fill="#d8e030"/><path d="M106.5 1161.5V1138" stroke="#1010d0" stroke-width="1.3"/><path d="M106.5 1161.5L130 1158" stroke="#d02020" stroke-width="1.2"/><path d="M106.5 1161.5L98 1157" stroke="#10a010" stroke-width="1.2"/><text x="105.5" y="1138" font-family="Liberation Sans" font-size="9.5" fill="#2020e0">z</text><text x="128" y="1159" font-family="Liberation Sans" font-size="9" fill="#d02020">x</text><text x="95" y="1158" font-family="Liberation Sans" font-size="9.5" fill="#10a010">y</text></g></svg></body></html>
